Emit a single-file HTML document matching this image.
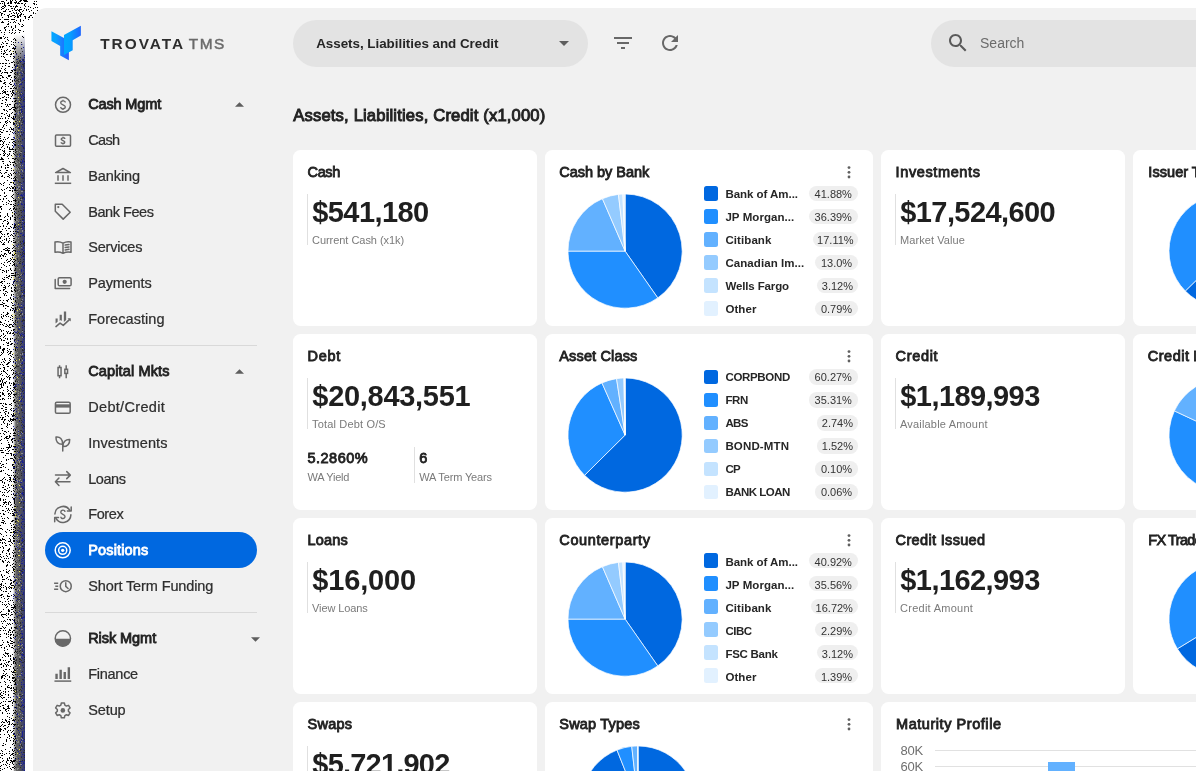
<!DOCTYPE html>
<html><head><meta charset="utf-8"><title>Trovata TMS</title>
<style>
html,body{margin:0;padding:0}
body{width:1196px;height:771px;overflow:hidden;background:#fff;position:relative;font-family:"Liberation Sans", sans-serif}
.t{position:absolute;white-space:pre}
#tx{position:absolute;left:0;top:0;width:1196px;height:771px;will-change:transform}
</style></head>
<body>
<svg style="position:absolute;left:0;top:0" width="40" height="771" viewBox="0 0 40 771" shape-rendering="crispEdges">
<defs><linearGradient id="bandx" x1="0" x2="1" y1="0" y2="0"><stop offset="0" stop-color="#606060" stop-opacity="0"/><stop offset="0.25" stop-color="#5c5c5c" stop-opacity="0.95"/><stop offset="0.6" stop-color="#555558" stop-opacity="1"/><stop offset="0.8" stop-color="#44486a" stop-opacity="1"/><stop offset="1" stop-color="#33386a" stop-opacity="1"/></linearGradient>
<linearGradient id="bandy" x1="0" x2="0" y1="0" y2="1"><stop offset="0" stop-color="#fff" stop-opacity="1"/><stop offset="1" stop-color="#fff" stop-opacity="0"/></linearGradient></defs>
<rect x="13" y="34" width="12" height="737" fill="url(#bandx)"/>
<rect x="13" y="34" width="12" height="30" fill="url(#bandy)"/>
<g stroke-width="1" transform="translate(0,0.5)"><path d="M6 0h1M10 0h1M12 0h1M15 0h1M20 0h2M23 0h4M1 1h3M10 1h2M16 1h1M19 1h2M24 1h4M34 1h1M36 1h1M4 2h1M8 2h1M10 2h2M14 2h3M18 2h1M0 3h1M2 3h1M4 3h1M7 3h2M10 3h2M15 3h1M17 3h3M21 3h2M25 3h1M33 3h2M4 4h1M24 4h1M34 4h1M36 4h1M4 5h2M8 5h2M16 5h1M24 5h1M2 6h2M5 6h1M10 6h2M13 6h1M15 6h3M25 6h1M28 6h1M1 7h1M4 7h1M15 7h1M20 7h1M30 7h1M35 7h1M37 7h1M2 8h2M11 8h2M14 8h1M24 8h1M33 8h1M1 9h1M6 9h1M8 9h1M14 9h1M17 9h1M19 9h3M26 9h1M28 9h1M5 10h1M12 10h1M15 10h2M18 10h2M23 10h1M26 10h1M31 10h1M37 10h1M3 11h3M9 11h2M19 11h1M22 11h1M29 11h1M0 12h1M13 12h1M16 12h1M20 12h1M33 12h1M1 13h2M11 13h1M14 13h1M16 13h1M18 13h1M21 13h1M33 13h1M35 13h1M1 14h1M4 14h1M9 14h1M17 14h1M20 14h2M23 14h1M36 14h1M1 15h1M7 15h2M12 15h3M17 15h1M19 15h2M30 15h2M8 16h1M10 16h2M15 16h1M17 16h2M20 16h1M24 16h2M29 16h1M2 17h1M8 17h1M14 17h1M17 17h2M25 17h1M28 17h2M32 17h1M25 18h1M34 18h1M36 18h1M0 19h1M4 19h5M11 19h4M20 19h1M28 19h1M16 20h1M20 20h1M23 20h1M2 21h1M8 21h1M14 21h1M20 21h1M1 22h3M10 22h1M13 22h1M15 22h1M8 23h1M18 23h1M7 24h2M19 24h1M22 24h1M15 25h1M23 25h1M6 26h1M8 26h1M11 26h1M15 26h1M21 26h2M4 27h2M11 27h1M15 27h1M4 28h1M13 28h1M5 29h1M12 29h1M18 29h1M0 30h1M5 30h1M9 30h1M12 30h1M15 30h1M19 30h2M23 31h1M1 32h1M4 32h1M9 32h1M12 32h1M15 32h1M19 32h1M11 33h1M14 33h1M4 34h1M3 36h1M22 36h1M0 37h2M5 37h1M7 37h1M23 37h1M0 38h2M4 38h1M14 38h1M7 39h1M13 39h1M15 39h1M8 40h1M15 40h1M5 41h1M11 41h1M2 42h1M13 42h1M15 42h1M3 43h1M6 43h2M1 44h1M11 44h1M13 44h1M6 45h1M14 45h1M0 46h1M2 46h2M9 46h1M15 46h1M0 47h1M2 47h1M13 47h1M15 47h1M12 48h4M1 49h1M7 49h1M14 49h1M4 50h1M6 50h1M10 50h1M1 51h1M4 51h1M9 51h1M13 51h1M15 51h1M5 52h1M15 52h1M1 53h1M3 53h2M11 53h1M13 53h1M3 54h1M6 54h2M10 54h2M1 56h1M3 56h1M10 56h1M13 56h2M4 57h1M14 57h1M13 58h1M5 59h1M6 60h1M8 60h1M13 61h1M11 62h2M14 62h1M0 63h1M2 63h2M5 63h2M9 63h1M14 64h1M5 65h1M14 65h1M2 66h1M8 66h2M15 66h1M12 67h1M14 67h1M1 68h1M5 68h1M4 69h1M13 69h1M15 69h1M0 70h1M5 70h1M11 70h2M14 70h2M0 71h1M12 71h1M2 72h1M4 72h4M10 72h2M15 72h1M1 73h1M7 73h1M14 73h1M14 74h2M0 75h2M8 75h3M2 76h1M8 76h2M14 76h1M2 77h2M6 77h1M11 77h1M14 77h1M0 78h1M7 78h1M15 78h1M10 79h1M15 79h1M0 80h1M4 80h1M12 80h1M14 80h1M0 81h2M12 81h1M14 81h1M4 82h2M10 82h1M3 83h2M9 83h1M5 84h1M10 84h2M13 85h1M2 86h1M5 86h1M8 86h1M12 86h1M1 87h1M14 87h1M1 88h1M10 88h2M13 88h3M5 89h1M3 90h1M12 90h2M2 91h1M4 91h2M7 91h1M10 91h1M12 91h1M3 92h3M12 92h2M0 93h1M2 93h1M5 93h1M11 93h1M13 93h1M6 94h3M12 94h1M14 94h2M8 95h1M12 95h1M14 95h1M4 96h1M11 96h1M15 96h1M2 97h2M6 97h1M8 97h1M0 98h1M10 98h1M13 98h3M5 99h2M2 100h1M6 100h1M15 100h1M12 101h1M14 101h2M5 102h1M1 103h2M15 103h1M5 104h1M7 104h1M9 104h2M14 104h1M7 105h1M14 105h1M1 106h1M6 106h1M8 106h1M14 106h1M12 107h4M11 108h1M15 108h1M3 109h2M9 109h2M13 109h2M4 110h1M6 110h1M14 110h2M7 111h1M15 111h1M12 112h1M1 113h2M6 113h1M11 113h1M4 114h1M9 114h1M14 114h2M7 115h1M9 115h1M1 116h1M8 116h2M13 116h1M15 116h1M5 117h1M11 117h1M13 117h1M15 117h1M0 118h1M2 118h1M5 118h1M8 118h1M12 118h3M13 119h2M7 120h1M5 121h2M9 121h1M15 121h1M0 122h1M5 122h1M7 122h1M10 122h1M13 122h1M15 122h1M6 123h1M13 123h2M4 124h1M13 124h2M3 125h1M6 125h1M14 125h1M3 126h1M2 127h1M10 127h1M4 128h1M11 128h1M13 128h1M0 129h2M9 129h1M11 129h3M3 130h1M13 130h1M0 131h1M6 131h2M10 131h1M15 131h1M1 132h2M12 132h1M13 133h1M15 133h1M0 134h1M9 134h1M0 136h1M15 136h1M4 137h1M8 137h1M0 138h1M7 138h1M3 139h1M5 139h1M11 139h3M0 140h2M0 141h1M2 141h1M4 141h1M13 141h2M3 142h1M9 142h1M12 142h1M15 142h1M3 143h1M13 143h1M0 144h1M2 144h1M6 144h1M8 144h1M14 144h2M3 145h1M12 145h1M15 145h1M2 146h1M7 146h1M1 147h1M7 147h1M9 147h1M4 148h1M9 148h1M12 148h1M0 149h1M9 149h7M2 150h1M4 150h1M15 150h1M3 151h2M9 151h2M13 151h1M4 152h1M15 152h1M3 153h1M5 153h1M9 153h1M13 153h1M0 154h1M4 154h1M7 154h1M9 154h1M14 154h1M3 155h2M8 155h1M11 155h1M7 156h1M1 157h1M1 158h2M8 158h1M12 158h4M0 159h4M14 159h2M2 161h2M9 161h1M14 161h1M10 162h1M12 162h4M3 163h1M15 163h1M7 164h1M10 164h1M13 164h1M5 165h1M7 165h2M13 165h1M1 166h1M1 167h1M5 167h1M7 167h2M5 168h1M11 168h1M0 170h1M6 170h2M11 170h1M13 170h1M15 170h1M0 172h1M5 172h2M14 172h1M1 173h1M4 173h1M10 173h1M13 173h1M15 173h1M8 174h1M11 174h1M2 175h1M9 175h1M11 175h1M1 176h2M7 176h2M15 176h1M4 177h1M9 177h1M14 177h1M11 178h1M13 178h1M15 178h1M15 179h1M7 180h1M13 180h3M4 182h1M10 182h2M13 182h1M0 183h1M3 183h1M13 183h1M1 184h1M9 184h1M14 184h1M3 185h1M11 186h1M14 186h1M7 187h1M9 187h1M12 187h2M15 187h1M6 188h1M10 188h1M12 188h2M15 188h1M1 189h1M4 189h1M2 190h1M9 190h2M12 190h1M14 190h2M12 191h1M4 192h1M4 193h1M13 194h1M0 195h1M6 195h1M12 195h1M4 196h2M11 196h1M12 197h1M3 198h1M6 198h1M13 198h1M0 199h1M3 199h1M15 199h1M8 200h1M13 200h3M2 201h1M9 201h1M11 201h1M15 201h1M6 202h1M8 203h1M15 203h1M3 204h1M6 204h1M10 204h2M13 204h1M14 205h2M0 206h2M13 206h1M0 207h1M14 207h2M1 208h1M10 208h1M13 208h2M1 209h1M9 209h1M13 209h1M15 209h1M11 210h1M14 210h1M14 211h1M0 212h1M12 212h1M15 212h1M7 213h1M12 213h1M14 213h2M7 214h1M14 214h1M0 215h1M7 215h1M12 215h1M15 215h1M0 216h1M5 216h1M8 216h1M12 216h1M4 217h1M10 217h1M14 217h2M10 218h1M0 219h2M7 219h1M10 219h1M14 219h2M4 220h2M15 220h1M3 221h1M7 221h1M14 221h1M8 222h1M2 223h1M7 223h2M7 224h1M12 224h1M14 224h2M3 225h1M14 225h2M0 226h1M3 226h1M6 226h1M10 226h1M14 226h1M11 227h1M14 227h2M5 228h1M8 228h2M13 228h1M2 229h1M15 229h1M6 230h1M0 231h2M10 231h1M13 231h1M15 231h1M0 232h1M15 232h1M1 233h1M7 233h2M13 233h1M2 234h1M4 234h1M7 234h1M11 234h1M14 234h1M10 235h1M12 235h1M15 235h1M1 236h1M4 236h1M8 236h1M13 236h1M0 237h1M0 238h1M6 238h1M9 238h1M13 238h2M4 239h1M6 239h1M2 240h1M6 240h1M9 240h1M13 240h1M0 241h1M8 241h1M11 241h1M1 242h1M4 242h1M8 242h1M13 242h3M3 243h1M2 244h3M13 245h1M14 246h1M7 247h1M13 247h1M5 248h2M8 248h2M12 248h1M14 248h1M3 249h2M7 249h1M15 249h1M5 250h5M13 250h3M1 251h1M8 251h1M12 251h1M15 251h1M8 252h1M10 252h1M4 253h2M9 253h2M14 253h2M1 254h1M4 254h1M6 254h1M12 254h1M14 254h1M0 255h1M2 255h2M12 255h2M15 255h1M0 256h1M3 256h1M5 256h1M12 257h1M1 258h1M10 258h1M7 259h1M11 259h1M13 259h2M6 260h1M10 260h1M15 260h1M8 261h2M12 261h1M14 261h1M4 262h1M7 262h1M13 262h1M1 263h1M10 263h1M14 263h1M3 264h1M13 264h2M4 265h1M9 265h1M12 265h1M14 265h1M6 266h1M1 267h1M10 268h1M15 268h1M0 269h1M10 269h1M2 270h2M6 270h1M8 270h1M11 270h1M14 270h2M4 271h1M6 271h1M2 272h1M6 272h1M15 272h1M11 273h3M15 273h1M6 275h1M9 275h1M11 275h5M8 276h2M15 276h1M4 277h1M6 277h2M11 277h1M2 278h1M8 278h1M3 279h2M10 279h1M14 279h1M1 281h2M4 281h1M14 281h1M0 282h2M13 282h1M2 283h1M7 283h1M9 283h1M12 284h1M1 285h1M4 285h1M9 285h1M13 285h1M15 285h1M5 286h1M8 286h1M3 287h3M11 287h1M14 287h2M5 288h1M11 288h1M15 288h1M3 289h2M14 289h1M0 290h1M3 290h1M11 290h1M14 290h1M5 291h2M11 291h2M15 291h1M7 292h1M3 293h1M5 293h1M4 294h1M11 294h1M13 294h1M4 295h1M6 295h1M11 295h1M13 296h1M0 297h1M10 297h1M15 297h1M10 298h1M13 298h1M8 299h1M11 299h1M13 299h1M15 299h1M0 300h1M3 300h1M6 300h2M15 300h1M7 301h1M15 301h1M2 302h1M11 302h1M3 303h2M12 303h1M0 304h3M3 305h1M5 305h2M12 305h2M15 305h1M3 306h1M7 306h2M11 307h1M15 307h1M5 308h1M12 308h2M15 308h1M10 309h1M15 309h1M10 310h1M12 310h1M14 310h2M14 311h1M3 312h1M7 312h1M14 312h1M7 313h2M1 314h1M6 314h2M3 315h1M5 315h1M11 315h1M15 315h1M1 316h1M3 316h1M6 316h1M8 316h1M12 316h1M1 317h1M10 317h1M2 318h1M12 318h1M10 319h1M5 320h1M12 320h1M15 320h1M0 321h1M8 321h1M0 322h2M13 322h1M15 322h1M4 323h1M14 323h1M0 324h1M2 324h1M6 324h1M9 324h3M13 324h1M15 324h1M3 325h1M7 325h1M9 325h1M12 325h1M5 326h2M8 326h1M12 326h2M9 327h2M0 329h1M13 329h2M1 330h1M3 330h1M11 330h1M13 330h2M1 331h1M6 331h1M8 331h1M7 332h1M10 332h1M13 332h1M3 333h1M7 333h1M9 333h2M12 333h2M3 334h1M14 334h1M1 335h1M5 335h1M13 335h1M0 336h1M4 336h1M3 337h1M0 338h1M5 338h1M7 338h1M10 338h1M12 338h1M1 339h1M7 339h1M10 339h1M1 340h1M3 340h2M14 340h1M10 341h1M15 341h1M6 342h1M8 342h1M7 343h2M11 343h2M3 344h1M10 344h2M14 344h1M7 345h2M14 345h1M0 346h1M14 346h2M0 347h1M0 348h1M3 348h2M7 348h1M14 348h1M2 349h3M9 349h1M15 349h1M2 350h2M7 350h1M15 350h1M3 351h1M8 351h1M10 351h2M1 352h1M3 352h1M7 352h1M10 352h1M2 353h1M9 353h2M1 354h1M8 354h1M12 354h1M0 355h1M10 355h1M15 355h1M11 356h1M13 357h1M4 358h1M9 358h1M2 359h1M4 359h1M10 359h1M5 360h1M9 360h1M15 360h1M3 361h1M10 361h1M13 361h1M1 362h1M4 362h1M8 362h2M7 363h2M15 363h1M0 364h1M2 364h1M6 364h2M3 365h1M12 365h1M14 365h1M7 366h2M13 366h1M3 367h2M15 367h1M0 368h1M4 368h1M10 368h1M14 368h1M4 369h1M12 369h1M15 369h1M3 370h1M7 370h1M11 370h1M13 370h1M1 371h1M3 371h2M5 372h1M13 372h1M1 373h1M6 373h1M13 373h1M15 373h1M0 374h1M7 374h1M12 374h1M2 375h1M9 375h1M15 375h1M6 376h1M8 376h1M14 376h1M7 377h1M9 377h2M13 377h1M1 378h1M4 378h1M9 378h1M14 378h1M1 379h1M3 379h1M9 379h1M0 380h1M2 380h1M0 381h1M2 381h1M6 381h1M15 381h1M2 382h1M4 382h2M9 382h1M13 382h1M15 382h1M1 383h1M3 383h1M5 383h1M9 383h1M11 383h1M13 383h3M0 384h2M3 384h1M13 384h2M1 385h1M3 385h1M10 385h1M13 385h1M1 386h1M7 386h1M15 386h1M1 387h2M7 387h1M13 387h3M0 388h1M10 388h1M14 388h1M7 389h1M13 389h1M15 389h1M3 390h1M8 390h1M12 390h1M7 391h1M10 391h1M13 391h1M15 391h1M0 392h1M2 392h1M11 392h1M2 393h2M8 393h2M11 393h1M14 393h1M2 394h2M8 394h1M10 394h1M13 394h3M0 395h1M4 395h1M9 395h1M14 395h1M0 396h1M8 396h1M10 396h1M15 396h1M13 397h1M2 398h2M8 398h1M10 398h1M0 399h1M2 399h1M4 399h1M14 399h1M13 400h2M13 401h1M14 402h2M0 403h2M3 403h1M5 403h1M11 403h1M5 404h2M9 404h2M2 405h1M11 405h1M15 405h1M3 406h1M5 407h2M1 408h2M11 408h1M13 408h1M5 409h2M10 409h1M15 409h1M3 410h1M11 410h1M14 410h1M5 411h2M13 411h1M15 411h1M0 412h1M4 412h1M8 412h1M5 413h1M8 413h1M13 413h1M5 414h1M11 414h1M13 414h1M15 414h1M1 415h1M7 415h1M12 415h3M5 416h1M8 416h1M12 416h2M0 417h1M2 417h2M2 418h1M10 418h1M13 418h2M1 419h2M4 419h2M10 419h6M4 420h1M8 420h1M10 420h1M12 420h2M3 421h1M9 421h1M11 421h1M15 421h1M3 422h1M4 423h1M7 423h1M11 423h1M1 424h1M7 424h1M9 424h1M7 425h1M6 426h1M13 426h1M7 427h1M1 428h2M11 428h1M13 429h1M15 429h1M2 430h1M13 430h1M15 430h1M4 431h2M8 431h1M6 432h1M14 432h2M0 433h1M3 433h1M10 433h1M13 433h3M4 434h1M9 435h1M13 435h3M1 436h1M6 436h2M9 436h2M5 437h2M9 437h1M4 438h1M6 438h3M12 438h3M1 439h1M11 439h2M0 440h1M7 440h1M11 440h1M14 440h2M12 441h1M8 442h1M12 442h1M1 443h1M8 444h2M14 444h1M9 445h1M11 445h1M9 446h1M11 446h1M13 446h3M6 447h5M15 447h1M1 448h1M3 448h1M8 448h1M7 449h1M12 449h2M15 449h1M0 450h3M5 450h1M9 450h1M8 451h1M14 451h2M1 452h3M6 453h3M10 453h2M11 454h1M13 454h1M5 455h1M11 455h1M13 455h1M15 455h1M14 456h1M3 457h1M14 457h1M10 458h3M15 458h1M6 459h1M8 459h1M13 459h1M6 460h1M14 460h1M1 461h1M14 461h1M14 462h2M0 463h1M6 463h1M15 463h1M2 464h2M12 464h2M15 464h1M1 465h1M12 465h1M3 466h1M13 466h2M0 467h2M5 467h1M13 467h1M13 468h3M8 469h1M1 470h1M3 470h1M11 470h1M0 471h2M13 472h1M15 472h1M5 473h1M7 474h1M8 475h2M11 475h1M13 475h1M15 475h1M14 476h1M4 477h1M9 477h2M14 477h1M3 478h1M10 478h1M15 478h1M2 479h1M5 479h1M9 479h2M13 479h1M15 479h1M0 480h2M7 480h1M10 480h1M15 480h1M2 481h1M9 481h1M11 481h1M13 481h2M2 482h1M4 482h1M14 482h1M4 483h1M8 484h1M3 485h1M8 485h1M11 485h1M13 485h1M15 485h1M5 486h1M13 486h1M2 487h2M9 487h1M15 487h1M7 488h1M13 488h1M4 489h2M15 489h1M6 490h1M9 490h1M13 490h1M0 491h1M8 491h1M11 491h1M14 491h1M2 492h1M4 492h1M7 492h1M13 493h1M3 494h1M11 494h1M13 494h1M2 495h1M4 495h1M14 495h2M6 496h1M8 496h1M15 496h1M12 497h1M15 497h1M0 498h1M13 498h2M0 499h1M3 499h1M5 499h1M14 499h1M0 500h1M3 500h1M14 500h1M5 501h1M9 501h1M14 501h1M3 502h4M8 502h1M10 502h1M14 502h1M4 503h1M8 503h1M14 503h1M3 504h1M6 504h1M8 504h1M11 504h1M15 504h1M0 505h1M10 505h1M2 506h1M5 506h1M14 506h2M12 507h1M15 507h1M6 508h1M8 508h1M8 509h1M11 509h1M13 509h2M2 510h2M7 510h1M9 510h1M14 510h2M5 511h1M12 511h1M8 512h1M14 512h1M0 513h1M3 513h1M10 513h1M12 513h2M3 514h2M13 514h1M12 515h3M1 516h1M7 517h1M2 518h1M4 518h1M8 518h1M15 518h1M15 519h1M2 520h2M12 520h3M4 521h1M11 521h2M15 521h1M1 522h3M3 523h1M5 523h1M10 523h1M13 524h1M0 525h1M11 525h1M14 526h1M11 527h1M13 527h2M0 528h2M15 528h1M2 529h1M7 529h1M11 529h1M13 529h1M9 530h1M15 530h1M5 531h1M13 531h2M6 532h1M10 532h2M13 532h3M0 533h1M14 533h1M1 534h1M6 535h1M10 535h1M13 535h2M3 536h1M12 536h1M14 536h1M13 537h1M15 537h1M2 538h1M9 538h1M13 538h2M0 539h1M2 539h3M10 539h1M0 540h2M5 540h1M10 540h1M13 540h2M8 541h3M13 541h2M0 542h1M2 542h1M4 542h1M11 542h1M2 543h1M5 543h1M12 543h1M9 544h1M13 544h1M5 545h2M10 545h1M2 546h1M14 546h1M0 547h1M3 547h1M3 548h1M9 548h1M15 548h1M8 549h2M15 549h1M3 550h1M7 550h2M13 550h1M2 551h1M8 551h1M2 552h1M12 552h1M14 552h1M6 553h1M9 553h1M13 553h1M0 554h1M9 554h1M6 555h1M13 555h1M15 555h1M0 556h1M3 556h1M7 556h1M13 556h1M15 556h1M1 557h1M10 557h1M4 558h1M6 558h1M8 558h1M12 558h1M0 559h1M14 559h1M2 560h1M5 560h1M13 560h1M2 561h2M8 561h1M15 561h1M3 562h1M7 562h1M9 562h1M13 563h1M7 564h1M12 564h1M15 564h1M6 565h2M10 565h1M6 566h1M13 566h2M12 567h1M15 567h1M13 568h1M6 569h1M13 569h2M3 570h1M9 570h1M13 570h2M0 571h1M6 571h1M8 571h1M14 571h1M6 572h2M12 572h1M8 573h1M14 573h1M1 574h1M14 574h1M1 575h1M4 575h1M2 576h1M9 576h1M13 576h2M2 577h1M7 577h1M14 577h1M6 578h1M15 578h1M2 579h3M8 579h1M10 579h1M10 580h2M15 580h1M2 581h1M13 581h2M11 582h1M13 582h1M1 583h1M5 583h1M10 583h2M0 584h2M10 584h1M15 584h1M1 585h1M3 585h1M11 585h3M15 585h1M0 586h1M5 586h1M9 586h1M14 586h1M1 587h1M3 587h1M6 587h1M8 587h1M10 587h2M14 587h2M0 588h1M6 588h1M9 588h1M11 588h1M13 588h2M0 589h1M6 589h1M15 589h1M1 590h1M3 591h1M5 591h2M10 591h1M15 592h1M8 593h1M1 594h2M0 595h2M7 595h1M11 595h1M14 595h1M3 596h1M7 596h3M15 596h1M1 597h1M4 598h1M8 598h1M7 599h1M10 600h1M12 600h1M0 601h1M5 601h1M8 601h1M2 602h1M13 602h1M8 603h1M2 604h1M4 604h1M6 604h1M9 604h1M13 604h1M15 604h1M5 605h1M11 605h1M14 605h1M7 606h1M14 606h2M6 607h1M11 607h4M13 608h1M15 608h1M3 609h1M8 609h1M11 609h2M8 610h2M15 610h1M1 611h1M8 611h2M13 611h1M0 612h1M11 612h1M14 612h1M6 613h1M8 613h1M15 613h1M1 614h5M8 614h1M11 614h2M15 614h1M1 615h1M6 615h1M10 615h1M2 616h1M15 616h1M3 617h1M8 617h1M14 617h1M7 619h1M9 619h2M12 619h1M14 619h1M4 620h1M10 620h1M13 620h2M1 621h1M3 621h1M5 621h1M14 621h1M2 623h1M7 623h1M9 623h1M12 623h1M15 623h1M8 624h1M10 624h1M6 625h1M2 626h1M3 627h1M5 627h1M11 627h1M14 627h2M0 628h2M4 628h1M11 628h1M9 629h1M0 630h1M3 630h1M5 630h1M9 630h2M13 630h2M8 631h1M12 631h1M8 632h1M10 632h1M12 632h1M15 632h1M4 633h1M6 633h1M0 634h1M6 634h1M8 634h1M10 634h2M13 634h1M10 635h1M13 635h1M0 636h1M8 636h1M15 636h1M6 637h1M10 637h1M13 637h1M10 638h2M2 640h1M10 640h1M7 641h1M11 641h2M14 641h1M3 642h1M7 642h2M13 642h2M10 643h3M2 644h1M8 644h1M0 645h2M9 645h1M12 645h1M15 645h1M6 646h1M9 646h1M14 646h1M1 647h1M4 647h1M11 647h2M4 648h1M13 648h1M7 649h1M15 649h1M4 650h1M15 651h1M5 652h1M14 652h1M5 653h4M3 654h1M7 654h1M12 654h1M4 655h1M8 655h1M10 655h1M5 656h1M8 656h1M10 656h1M2 657h1M13 657h1M15 657h1M10 658h1M13 658h1M0 659h1M10 659h1M13 659h3M0 660h1M3 660h1M5 660h1M11 660h1M15 660h1M8 661h2M13 661h2M6 662h1M8 662h1M13 662h1M15 662h1M1 663h1M4 663h1M13 663h1M15 663h1M0 664h2M5 664h1M7 664h1M11 664h1M3 665h1M6 665h1M8 665h1M3 666h1M6 666h1M10 666h1M1 667h1M13 667h2M13 668h1M5 669h2M9 669h1M14 669h1M3 670h1M14 670h2M4 671h1M11 671h1M13 671h1M12 672h4M3 673h1M6 673h1M5 674h1M12 674h1M15 674h1M2 675h3M7 675h1M13 675h1M1 676h2M5 676h1M9 676h1M1 677h2M9 677h1M12 677h3M1 678h1M4 678h1M12 678h2M7 679h1M15 679h1M9 680h1M12 680h1M14 680h2M4 681h1M13 681h2M0 682h1M5 682h1M10 682h1M15 682h1M15 683h1M5 684h1M14 684h2M8 685h1M11 685h1M1 686h1M7 686h1M7 687h3M11 687h1M13 687h1M5 688h1M10 688h2M13 688h1M5 689h1M14 689h2M0 690h1M11 690h1M13 690h1M3 691h1M5 691h1M8 691h1M14 691h1M1 692h1M5 692h1M0 693h1M3 693h1M13 693h2M0 694h1M5 694h1M8 694h1M14 694h1M1 695h2M8 695h1M0 696h1M14 696h1M1 697h1M3 697h2M8 697h1M10 697h1M2 698h1M6 699h1M13 699h1M11 700h1M3 701h1M5 701h1M8 701h3M13 701h3M1 702h1M12 702h1M15 702h1M0 703h1M12 703h1M5 704h1M2 705h2M8 705h1M12 705h1M15 705h1M0 706h1M7 706h2M14 706h1M3 707h1M8 707h1M15 707h1M3 708h2M7 708h3M15 708h1M5 709h2M0 710h1M5 710h1M8 710h1M13 710h1M15 710h1M6 711h1M2 712h1M14 712h1M2 713h1M7 713h1M9 713h1M13 713h2M12 715h1M7 716h1M9 717h1M15 717h1M11 718h1M2 719h1M5 719h1M9 719h1M13 719h1M15 719h1M5 720h2M12 720h3M2 721h1M6 721h1M8 721h2M1 722h1M3 722h2M7 722h1M9 722h1M9 723h1M12 723h1M2 724h1M8 724h2M11 724h1M13 724h3M1 725h1M4 725h2M14 725h1M0 726h1M3 726h1M8 726h1M13 726h1M7 727h1M0 728h1M4 728h2M13 728h2M0 729h2M5 729h1M15 729h1M0 730h1M3 730h1M8 730h1M10 730h1M13 730h1M0 731h1M7 731h1M12 731h1M7 732h1M11 732h1M14 733h1M0 734h1M4 734h1M8 734h1M13 734h2M9 735h1M9 736h1M14 736h2M0 737h1M7 737h1M11 737h1M15 737h1M9 738h1M13 738h1M15 738h1M6 739h1M14 739h1M6 740h1M10 740h1M13 740h1M6 741h1M13 741h1M15 741h1M15 742h1M3 743h1M13 743h1M15 743h1M5 744h1M12 744h1M2 745h2M14 745h1M10 747h1M15 747h1M5 749h1M12 749h1M1 750h1M12 750h1M14 750h1M2 751h1M9 751h1M13 751h1M15 752h1M0 753h1M2 753h1M6 753h1M9 753h1M12 753h2M4 754h1M11 754h2M15 754h1M1 755h2M10 755h1M13 755h1M0 757h1M9 757h1M13 757h1M2 758h1M7 758h1M9 758h1M11 758h1M15 758h1M7 759h1M3 760h1M7 760h2M10 760h2M13 760h3M2 761h1M6 761h1M11 761h4M0 762h1M6 762h1M10 762h1M12 762h1M7 763h1M12 763h1M3 764h1M5 764h1M9 764h1M13 764h1M1 765h1M6 765h1M0 766h1M9 766h1M14 766h1M7 767h1M12 767h2M0 768h1M4 768h1M10 768h1M14 768h2M2 769h1M11 769h1M0 770h1M14 770h1" stroke="#000"/>
<path d="M21 42h1M21 48h1M22 51h1M16 53h1M20 53h1M18 56h1M20 57h1M18 58h1M16 59h1M23 59h1M19 60h2M23 60h1M17 61h1M19 61h1M23 61h1M16 62h1M18 62h1M20 62h1M17 63h2M24 63h1M22 64h2M17 65h1M23 65h1M17 66h1M23 66h1M15 67h1M19 67h1M15 68h1M15 69h1M19 69h1M23 71h1M23 72h1M17 73h1M24 73h1M17 74h1M22 75h1M15 76h1M16 77h1M18 79h1M20 79h1M16 80h2M24 80h1M15 81h1M18 81h1M22 82h1M16 83h1M16 87h1M23 87h1M16 88h1M24 90h1M17 91h1M19 92h1M22 93h1M20 94h1M22 95h1M24 97h1M16 98h1M20 98h1M21 99h1M24 99h1M16 100h1M20 100h1M23 100h1M19 101h1M19 102h1M16 103h2M18 105h1M19 106h1M24 106h1M17 107h1M20 107h1M22 107h1M16 108h1M24 108h1M18 109h1M21 109h1M15 110h1M19 110h1M20 111h1M22 111h1M20 113h1M22 113h1M19 117h1M22 118h1M19 119h1M21 119h1M16 120h2M21 120h1M16 121h1M23 121h1M22 122h1M16 123h1M19 123h1M17 124h1M19 124h1M22 124h1M15 125h1M19 125h1M16 126h1M18 126h1M15 127h1M18 128h2M17 131h1M18 132h1M21 132h1M23 132h1M23 133h1M22 134h1M17 135h1M20 135h1M20 136h1M17 138h1M19 138h1M24 138h1M17 139h1M22 139h1M15 140h1M18 141h1M20 141h1M21 144h1M23 146h1M18 147h1M23 147h1M19 148h1M23 148h1M16 151h1M21 151h1M24 152h1M20 153h1M17 154h1M24 154h1M15 155h1M20 155h1M16 158h1M23 158h1M15 159h1M17 159h1M21 159h1M18 160h1M24 161h1M19 162h4M16 165h1M18 167h1M18 168h2M21 168h1M24 169h1M19 171h1M22 171h1M18 172h1M23 173h1M20 174h1M22 175h1M16 176h1M16 177h1M23 177h1M22 178h2M16 180h1M18 181h1M23 181h1M19 182h2M15 186h1M18 186h2M19 188h1M15 189h1M21 189h1M16 190h2M23 190h2M21 191h1M15 192h3M16 193h1M17 194h2M21 195h1M22 197h2M20 198h1M22 198h1M16 200h1M20 200h1M17 201h2M18 202h1M20 202h1M24 204h1M17 205h1M23 207h1M16 208h1M19 208h1M16 209h1M23 209h1M20 210h2M23 210h1M18 211h1M15 212h1M21 212h1M16 213h1M19 214h1M15 215h1M18 215h1M21 215h1M24 215h1M17 217h1M23 217h1M15 218h1M22 219h2M16 220h1M20 220h1M20 222h1M24 222h1M18 223h1M23 223h1M21 224h1M16 226h1M18 226h1M24 226h1M20 227h2M18 228h1M21 228h1M23 228h1M17 229h1M18 230h1M22 230h1M24 230h1M16 231h1M17 232h2M16 233h1M18 235h1M20 236h1M24 236h1M15 241h1M20 241h1M22 241h1M17 242h1M20 242h1M24 242h1M23 243h2M20 244h1M23 244h1M16 245h1M24 245h1M21 246h1M21 247h1M15 248h1M21 249h2M23 251h1M20 252h1M22 252h1M23 253h2M22 254h1M24 254h1M21 255h1M18 256h1M23 256h1M16 257h1M17 258h1M17 259h1M20 259h1M23 259h2M18 261h1M20 261h1M23 261h1M22 262h1M19 263h2M24 264h1M24 265h1M15 266h1M17 266h1M23 266h1M24 268h1M15 269h1M21 269h1M15 270h1M23 273h1M15 274h1M17 274h2M22 274h1M18 275h3M20 276h1M18 277h1M20 279h1M15 280h1M16 281h1M21 281h1M20 284h1M21 286h1M15 287h1M24 287h1M24 289h1M15 290h1M17 290h1M21 290h1M23 290h1M24 291h1M22 292h1M24 292h1M20 295h1M23 295h2M19 296h3M24 296h1M20 297h1M17 298h1M16 299h1M21 300h1M23 301h1M16 302h1M18 303h1M15 305h2M15 306h1M17 306h1M17 307h1M19 307h1M22 307h1M24 307h1M24 308h1M16 309h1M18 309h1M22 309h1M15 310h1M17 310h1M19 312h1M20 313h2M19 314h2M24 314h1M19 315h1M22 316h1M15 317h1M16 318h1M23 319h1M22 320h3M15 321h1M17 321h1M22 321h1M15 322h1M17 322h1M22 325h1M24 326h1M18 329h1M22 330h1M24 331h1M18 332h1M17 333h1M24 333h1M18 335h1M21 335h1M24 335h1M24 336h1M23 337h1M16 338h1M15 339h1M20 341h2M22 342h1M21 343h1M20 344h1M16 346h1M15 347h1M15 348h1M16 349h2M22 349h1M24 349h1M22 350h2M23 352h2M21 353h1M20 354h1M15 355h1M17 355h1M24 355h1M21 356h1M18 357h1M21 357h1M22 358h1M20 359h1M19 360h2M15 362h1M16 363h1M24 363h1M22 364h1M16 365h1M21 365h1M16 366h3M21 369h1M15 371h1M16 372h1M23 372h1M19 373h1M17 374h1M22 374h1M22 375h2M19 376h1M18 377h1M24 377h1M23 378h1M16 379h1M24 379h1M15 380h1M17 381h1M15 384h2M23 384h1M15 386h1M15 387h2M22 387h1M20 388h1M17 389h1M21 389h1M19 390h1M23 390h1M22 391h1M16 393h1M23 393h1M16 394h1M18 395h1M21 395h1M15 396h1M21 396h1M17 398h1M22 398h1M21 399h1M16 401h2M18 403h1M17 404h1M21 404h2M18 405h1M16 406h1M18 407h1M21 407h1M21 409h1M21 410h1M15 411h1M22 412h1M24 413h1M15 414h1M15 415h1M15 416h1M17 417h1M23 417h1M20 418h1M15 420h1M19 420h1M21 420h1M21 422h1M22 424h1M23 425h1M17 426h1M24 426h1M16 427h1M22 427h1M20 430h2M22 431h1M18 432h1M20 432h1M22 432h1M21 433h1M24 433h1M17 434h1M15 435h1M20 435h1M19 438h1M22 439h2M16 440h1M18 441h1M20 442h1M17 443h1M19 443h1M24 443h1M15 444h1M24 444h1M18 445h1M22 445h2M23 448h1M16 449h1M17 451h1M19 451h1M19 452h1M21 453h1M20 455h1M24 456h1M15 457h1M19 457h1M22 457h1M22 458h1M20 459h2M17 460h1M16 463h1M18 463h1M18 464h1M24 464h1M21 465h2M16 466h1M16 467h1M22 467h1M23 468h1M16 469h1M15 470h2M18 470h1M20 470h1M15 471h1M24 472h1M17 473h1M21 473h1M21 475h1M15 476h1M17 476h1M17 477h1M18 478h2M20 479h1M21 481h1M15 482h2M16 484h1M20 484h1M19 485h1M16 486h1M15 487h1M16 488h1M22 488h1M15 489h1M17 489h1M16 490h1M23 490h1M19 491h1M17 492h1M20 492h1M23 492h1M18 493h1M22 493h1M15 494h1M23 494h1M16 495h1M20 496h1M22 497h1M22 499h1M24 500h1M19 501h1M21 502h1M23 502h1M20 503h1M23 503h1M15 504h1M17 506h1M23 506h1M23 507h1M15 509h1M23 509h1M23 510h1M16 511h2M16 512h1M16 515h1M21 515h1M15 516h1M16 517h1M16 519h1M18 519h1M22 519h1M17 520h1M16 521h1M23 521h1M15 522h1M21 523h1M15 524h1M24 524h1M24 526h1M15 527h1M18 527h1M19 528h1M17 530h1M19 531h2M16 532h1M24 533h1M19 534h1M20 535h1M15 536h1M20 537h1M22 538h1M19 540h1M24 540h1M15 541h1M17 541h1M19 541h1M23 541h1M19 542h1M22 542h1M21 543h1M22 544h1M24 544h1M17 546h1M22 546h1M19 548h1M23 548h1M15 551h1M22 551h1M24 551h1M15 552h1M18 552h1M23 553h1M16 554h1M17 555h1M21 555h1M23 555h1M23 556h1M23 558h1M19 560h1M16 562h1M21 563h1M24 564h1M20 565h1M24 565h1M20 566h1M24 566h1M22 568h1M22 569h2M17 570h1M19 570h2M21 571h2M22 572h1M20 573h1M20 574h2M21 575h1M21 577h1M18 579h1M20 579h1M17 583h3M21 583h1M15 585h1M18 585h2M15 588h1M16 589h1M18 593h2M22 594h2M15 596h1M15 597h2M17 598h1M21 598h1M17 599h1M19 599h1M22 599h1M20 600h1M17 601h1M19 602h1M24 602h1M17 605h1M21 605h1M19 606h1M15 607h1M21 607h1M21 608h2M18 609h1M21 609h1M21 610h4M18 611h2M17 612h1M21 613h1M15 614h1M22 614h1M18 615h1M21 615h1M15 616h1M17 616h1M21 616h1M17 617h1M20 617h2M21 618h1M24 620h1M17 621h1M15 622h1M20 622h1M17 623h1M20 623h1M20 625h1M16 626h1M21 626h1M24 626h1M16 627h1M15 628h2M22 629h1M19 630h1M21 631h1M17 633h1M20 633h1M19 634h1M16 635h2M21 637h1M20 638h1M23 638h1M15 639h1M19 640h3M20 644h1M16 647h1M20 647h1M23 647h1M19 648h1M15 649h1M17 649h1M15 650h1M20 650h1M17 651h1M19 651h1M22 651h1M16 652h1M17 653h1M20 653h1M23 654h1M24 657h1M19 658h1M16 659h1M19 659h2M24 659h1M15 660h2M21 660h1M19 661h1M24 661h1M22 662h2M16 664h1M15 666h1M23 667h1M17 668h1M22 671h1M15 672h1M21 672h1M17 674h1M22 675h1M24 677h1M15 678h1M16 679h1M22 679h2M19 680h1M21 686h1M16 687h1M21 687h1M16 688h1M15 689h2M20 689h1M16 690h1M19 690h1M21 690h1M16 691h1M15 692h2M15 694h1M19 694h2M22 694h1M22 695h2M21 696h1M19 698h2M16 699h1M16 704h1M18 704h1M18 705h2M21 705h1M20 706h1M24 706h1M16 707h1M23 707h1M20 709h1M16 711h1M22 711h1M15 712h1M15 713h1M16 714h1M22 714h1M17 716h1M19 716h1M23 716h1M22 718h1M21 719h1M18 720h1M20 720h1M17 724h1M18 725h1M21 725h1M18 727h2M16 728h2M20 728h1M17 729h1M18 734h1M15 735h1M16 736h1M16 737h1M22 737h1M17 739h1M24 739h1M24 743h1M21 744h1M19 745h1M21 745h1M22 746h1M20 747h1M15 748h1M20 749h1M23 749h1M17 750h1M20 750h1M24 750h1M23 752h2M24 754h1M16 755h1M24 755h1M21 757h1M24 757h1M22 760h1M24 760h1M20 761h1M22 761h1M18 763h2M16 764h1M20 764h1M15 767h1M20 767h1M24 767h1" stroke="#2c2c30"/>
<path d="M16 40h1M22 44h1M16 46h1M21 49h1M17 53h1M16 54h1M21 60h2M15 62h1M15 63h1M18 64h1M14 67h1M16 67h2M16 68h1M21 69h1M16 71h1M19 71h1M14 72h1M22 72h1M14 74h1M19 74h1M16 76h1M18 76h1M17 77h1M14 78h1M15 79h1M19 80h1M14 81h1M20 82h1M19 83h1M15 84h1M18 84h1M19 86h1M17 87h1M14 88h1M17 88h1M16 90h1M18 92h1M21 93h1M14 94h1M18 94h1M14 95h1M16 95h1M15 96h2M16 97h1M18 97h1M17 99h2M16 101h1M15 102h1M16 104h1M19 104h1M21 104h1M16 105h1M18 105h1M18 108h1M20 108h1M17 109h2M18 111h1M20 111h1M15 112h1M18 112h1M17 113h2M21 113h1M18 114h1M22 116h1M16 117h1M20 117h1M18 119h1M20 119h1M16 120h1M17 121h1M15 122h1M17 123h1M21 123h1M17 124h2M14 125h1M16 125h1M18 126h1M16 128h1M17 129h1M19 130h1M21 130h1M16 131h1M18 133h1M20 133h1M20 134h1M15 135h1M18 135h1M15 136h1M17 138h1M15 139h2M18 139h1M14 142h1M18 144h1M21 144h1M14 145h1M18 145h1M18 148h1M14 149h1M16 150h2M14 151h1M19 151h1M17 152h1M20 152h2M16 156h1M18 156h1M14 158h1M16 159h1M22 160h1M22 161h1M15 162h2M19 162h1M17 163h1M20 165h1M22 165h1M17 167h1M15 168h2M18 168h1M16 169h1M18 169h1M21 169h1M15 170h1M22 170h1M19 171h1M21 171h2M17 172h1M19 174h1M15 175h1M14 176h1M16 176h1M16 178h1M17 179h1M18 181h1M17 184h1M21 184h1M15 185h1M15 186h1M18 186h2M17 187h2M22 187h1M17 188h1M16 189h2M19 189h1M17 191h1M21 191h2M16 192h1M15 193h1M17 193h1M21 195h1M19 198h1M16 199h1M21 199h1M17 201h1M20 201h1M20 202h1M21 203h1M18 204h1M15 207h1M17 207h1M14 210h1M15 212h1M15 213h1M16 214h1M16 215h1M16 217h1M16 219h1M16 220h2M14 221h2M18 221h1M22 221h1M22 224h1M16 225h1M21 228h1M17 230h2M22 230h1M22 231h1M15 232h1M17 233h1M14 234h1M17 234h1M16 235h3M14 236h1M16 237h1M15 238h2M18 238h1M14 240h2M18 241h1M17 242h1M16 245h1M15 246h2M18 246h1M21 247h1M14 248h1M18 248h1M15 249h1M21 249h1M16 252h1M16 254h1M15 255h1M18 255h1M18 256h1M14 257h1M16 257h1M15 258h1M16 259h1M15 261h2M16 262h1M18 262h1M17 263h1M17 267h1M14 269h1M19 269h1M15 271h1M16 273h1M18 273h1M21 274h1M18 275h1M20 275h1M16 276h2M19 278h1M21 279h1M16 280h1M19 280h1M17 281h1M16 284h1M18 284h1M16 286h1M17 288h1M19 288h1M15 289h1M19 290h1M18 291h1M14 292h1M16 292h1M15 293h1M22 293h1M17 294h1M22 294h1M15 295h1M15 296h1M17 296h2M14 297h2M18 298h1M15 299h2M22 299h1M21 301h1M14 302h1M15 303h1M17 303h1M21 304h1M14 305h1M16 305h2M21 305h1M15 306h2M14 307h1M18 308h1M17 309h1M21 310h1M17 311h1M19 313h1M22 313h1M22 314h1M17 315h1M20 315h1M14 318h1M18 319h1M14 321h1M16 321h1M16 323h1M14 324h1M14 326h2M16 328h1M16 329h1M14 330h1M16 330h1M16 331h1M22 331h1M14 332h1M16 334h1M14 335h2M19 335h1M15 336h1M18 337h1M22 337h1M15 341h1M17 341h1M16 342h1M14 345h1M16 345h1M15 346h1M17 346h1M22 348h1M16 349h1M17 352h1M16 353h1M22 353h1M20 354h1M22 354h1M17 356h1M15 357h1M14 358h1M19 360h1M22 360h1M15 361h1M16 362h1M16 363h1M20 363h1M18 364h1M15 365h1M20 366h1M14 367h1M15 369h2M14 370h1M18 372h1M14 373h1M21 374h1M16 376h1M17 377h1M14 378h1M18 378h1M15 379h1M18 381h1M15 382h2M15 383h1M18 383h1M18 384h1M15 385h1M20 385h1M14 386h1M16 386h1M16 387h1M14 391h1M16 391h1M18 391h1M20 392h1M14 393h1M18 393h1M15 395h1M18 395h1M20 395h1M16 396h1M15 398h1M17 398h1M16 399h1M20 399h1M20 401h1M16 402h1M17 404h1M18 405h1M14 406h1M16 407h1M21 407h1M14 408h1M18 409h1M15 410h1M15 411h1M18 411h1M18 412h1M15 415h1M17 415h1M14 418h1M16 419h1M19 419h1M15 421h1M17 423h1M16 430h1M18 430h1M18 431h1M15 432h1M18 432h1M21 432h1M16 433h1M22 433h1M15 434h1M18 434h1M20 435h1M14 436h1M16 440h1M21 440h1M17 442h2M17 443h1M14 444h1M18 444h2M20 445h1M15 447h1M17 447h2M14 448h1M21 448h1M17 449h1M15 452h1M17 452h1M21 453h2M17 457h1M18 458h1M15 460h1M18 460h1M20 460h1M19 461h1M15 462h1M19 462h1M16 463h1M15 464h1M17 464h1M18 465h1M22 466h1M17 467h2M15 468h1M20 469h1M21 470h1M15 473h1M18 473h1M14 474h1M17 475h1M17 478h1M16 479h1M20 479h1M17 480h1M19 480h1M17 481h1M21 481h1M17 482h1M16 483h1M18 484h1M21 486h1M14 487h1M14 488h1M20 488h2M16 489h1M18 489h1M16 490h1M15 491h1M17 493h1M20 493h1M17 494h1M15 496h1M17 496h1M22 497h1M20 498h1M22 498h1M21 499h1M21 500h1M14 505h1M20 507h2M14 508h1M17 511h1M21 514h1M18 515h2M16 516h1M18 516h1M16 517h3M14 518h1M18 518h1M21 518h1M14 520h1M14 522h1M17 524h1M18 526h1M17 531h1M14 535h2M15 537h2M18 537h1M17 538h1M16 539h1M18 539h1M15 540h1M15 541h1M18 542h1M15 543h1M17 543h3M17 544h1M21 544h2M14 545h2M18 545h1M17 546h1M20 546h1M16 547h1M14 550h1M14 551h2M18 551h2M15 553h1M17 553h1M14 554h1M22 555h1M14 558h1M17 558h1M16 559h1M18 559h1M14 560h1M16 561h1M17 563h1M19 563h1M14 564h1M18 564h1M16 567h2M22 572h1M14 573h1M22 574h1M14 575h1M14 576h1M19 576h1M15 578h1M17 579h1M20 580h1M16 581h1M19 582h1M14 583h1M18 583h2M16 584h1M21 585h1M16 586h1M15 587h1M19 587h1M14 588h2M18 588h1M17 589h3M17 590h1M16 592h1M15 593h1M18 593h1M14 594h2M14 598h1M19 598h1M15 599h1M19 600h1M18 601h1M19 602h1M18 605h1M22 605h1M14 609h1M18 609h1M20 610h1M18 611h1M16 612h1M19 612h1M17 613h1M15 616h2M20 617h1M16 619h1M18 619h1M21 619h1M18 620h1M15 621h2M18 621h1M14 622h1M14 624h1M17 624h1M15 625h1M19 625h1M21 626h1M16 629h1M21 629h2M16 630h2M15 633h2M18 635h1M14 636h1M22 636h1M16 637h1M15 638h1M19 638h1M18 639h1M21 639h1M18 640h1M14 641h1M15 643h1M22 644h1M14 645h1M21 645h1M15 646h1M15 647h2M18 647h1M22 647h1M14 649h1M20 649h1M16 650h1M15 652h1M22 652h1M16 653h1M18 654h1M14 655h1M16 655h1M19 656h2M19 657h3M15 659h1M14 660h1M14 663h1M17 664h1M14 666h1M14 667h1M16 667h1M14 668h1M15 669h1M17 669h1M20 669h1M15 673h2M21 673h1M15 675h1M19 675h2M18 676h1M14 678h1M17 679h2M18 680h1M17 684h1M15 685h1M15 688h1M22 688h1M14 690h1M17 690h1M15 691h1M18 693h1M14 694h1M18 694h1M22 694h1M17 695h2M14 696h1M16 696h1M18 696h1M18 697h1M17 699h1M22 699h1M21 700h1M18 702h1M17 703h1M15 704h1M15 705h1M14 706h2M17 706h1M19 707h1M14 708h2M15 709h2M16 710h1M19 710h1M14 713h1M16 713h1M20 713h1M18 714h1M22 714h1M15 715h1M22 717h1M18 718h1M21 718h1M14 719h1M22 719h1M21 720h1M15 721h1M20 721h1M18 725h1M22 726h1M15 729h1M14 732h1M20 732h1M17 734h1M16 736h1M18 736h2M16 737h1M21 738h1M15 739h1M17 739h1M22 739h1M16 741h1M18 741h1M20 741h2M17 742h2M20 744h1M15 746h1M21 747h1M17 748h1M14 749h1M19 754h1M14 755h1M16 755h1M15 757h2M14 759h1M16 760h2M19 760h1M16 762h1M16 763h1M15 764h1M20 764h2M15 768h1M17 768h2M17 769h1M14 770h2" stroke="#8e8e8e"/>
<path d="M18 42h1M21 44h1M15 47h1M23 47h1M16 54h1M24 55h1M14 56h1M24 57h1M17 59h1M22 59h1M22 60h1M20 61h2M23 61h2M23 63h1M16 65h1M16 66h1M21 66h1M15 67h1M23 67h1M24 68h1M13 69h2M17 72h1M20 72h1M21 73h1M21 75h1M24 77h1M22 78h2M14 79h1M22 79h2M21 80h1M24 82h1M14 83h1M21 83h1M14 84h1M19 84h3M15 85h1M19 86h1M22 87h1M24 88h1M21 89h1M21 92h1M14 93h1M23 94h1M20 95h1M22 95h1M21 96h1M23 96h1M21 97h1M13 98h1M23 98h1M23 99h1M23 101h2M17 103h1M20 103h1M21 104h1M24 105h1M21 106h3M22 107h1M24 108h1M20 109h1M22 109h1M21 110h1M21 111h1M19 112h1M21 112h1M24 112h1M16 113h1M15 115h1M23 117h1M14 118h1M21 118h1M23 120h1M24 121h1M23 122h1M24 123h1M14 124h1M17 125h1M21 125h1M19 126h1M18 127h2M22 127h1M24 128h1M13 129h1M21 129h1M24 130h1M21 131h1M14 132h1M18 132h1M13 133h1M23 133h1M21 134h1M22 135h1M13 137h2M14 138h1M19 138h1M15 140h1M22 140h1M13 143h1M14 145h1M18 145h1M21 145h2M13 146h1M22 146h2M13 147h1M24 148h1M24 151h1M19 154h1M23 155h1M16 156h1M19 156h1M23 156h2M23 159h1M22 160h1M20 161h1M22 161h2M22 162h1M24 162h1M21 163h1M24 164h1M21 165h1M14 166h1M24 167h1M21 168h1M24 168h1M24 170h1M21 171h1M16 172h1M21 175h1M21 177h2M13 180h1M14 181h1M18 181h1M23 182h1M21 183h1M15 184h1M21 185h1M22 186h1M17 187h1M21 187h1M21 188h1M14 189h1M21 189h2M18 193h1M24 193h1M21 194h1M23 194h1M20 195h3M24 195h1M17 196h1M22 196h1M18 197h1M23 198h2M24 199h1M23 201h1M21 203h1M24 203h1M18 204h1M21 204h2M24 205h1M24 207h1M24 210h1M22 211h1M24 211h1M15 212h1M22 216h1M24 216h1M21 217h1M19 218h1M22 220h2M19 222h1M22 222h1M14 223h1M24 223h1M14 224h1M22 224h1M24 224h1M19 226h1M22 226h1M13 227h1M17 227h1M22 227h1M23 228h1M15 229h1M18 229h1M22 229h1M17 231h1M14 233h1M20 233h2M23 234h1M22 235h2M18 236h1M23 240h1M23 241h1M23 242h1M21 243h1M18 244h1M16 245h1M17 246h1M23 247h1M23 248h1M21 249h1M23 250h2M17 251h1M19 251h1M24 252h1M14 253h1M22 253h1M20 254h1M23 255h1M22 256h1M24 256h1M21 257h1M24 259h1M19 262h1M22 263h1M22 264h1M24 264h1M16 265h1M23 267h1M24 268h1M21 269h1M21 270h1M23 270h1M21 271h1M16 272h1M24 273h1M24 274h1M22 275h1M19 277h1M21 278h1M13 279h1M14 280h1M22 280h1M13 281h1M17 281h1M24 281h1M13 283h1M23 284h1M21 285h2M21 288h1M24 290h1M21 291h1M23 291h1M23 293h2M22 295h1M13 296h1M21 296h1M15 297h1M14 304h1M18 304h1M21 304h1M23 305h1M19 306h1M20 307h3M13 309h1M21 309h1M15 311h1M21 312h1M22 317h1M24 317h1M17 318h1M19 318h1M21 321h1M17 322h1M23 323h1M13 324h1M17 326h1M22 327h1M18 328h1M19 329h1M14 331h1M17 331h1M15 332h2M19 333h1M21 333h1M20 334h1M22 334h2M13 335h1M20 335h1M24 335h1M23 336h1M24 338h1M14 339h1M23 339h1M18 340h1M14 341h1M22 341h1M15 342h1M22 342h1M17 343h1M24 344h1M21 346h2M24 346h1M16 347h2M20 347h1M22 347h1M24 348h1M13 349h1M24 354h1M22 356h1M24 356h1M14 359h1M24 359h1M23 360h2M13 362h1M15 362h1M22 362h1M21 363h2M24 367h1M20 368h1M23 368h1M21 370h1M23 370h1M15 371h1M22 371h1M20 373h2M24 373h1M16 374h1M22 374h2M18 375h1M15 377h1M21 377h1M13 378h1M22 379h1M22 382h1M22 383h1M24 383h1M16 384h1M18 384h1M21 384h1M15 385h1M14 386h1M16 386h1M22 388h2M13 389h1M22 390h1M24 392h1M21 393h1M21 395h1M23 396h1M19 397h1M23 397h1M19 399h1M21 400h1M20 401h2M23 401h1M24 404h1M19 405h1M22 405h1M16 408h1M15 409h1M13 410h1M22 410h1M16 411h1M14 413h1M19 413h1M13 416h1M22 416h1M16 418h2M23 419h1M24 420h1M19 421h1M22 421h1M23 422h1M21 425h1M13 426h1M23 426h1M14 428h1M23 428h1M18 431h1M23 431h1M21 433h1M18 435h1M22 437h1M24 437h1M13 438h1M20 438h1M24 439h1M18 440h1M21 441h1M21 443h1M23 443h1M21 444h1M22 445h2M14 447h2M17 447h1M24 447h1M20 449h1M22 449h2M20 450h1M24 451h1M18 452h1M14 454h1M16 454h1M23 455h1M20 456h2M19 459h1M21 459h1M13 460h1M17 460h1M22 460h1M21 461h2M13 462h1M15 462h1M20 462h1M22 462h2M15 463h1M21 464h1M24 464h1M21 465h1M24 466h1M13 467h2M22 467h1M20 469h1M24 469h1M15 471h1M23 471h1M24 473h1M24 475h1M13 478h1M14 479h1M23 479h2M16 480h1M23 480h2M18 481h1M23 481h1M20 482h2M24 485h1M21 486h2M16 487h1M22 487h2M23 488h1M24 489h1M22 492h1M13 493h1M16 493h1M21 493h3M22 494h1M19 495h1M23 495h1M15 497h1M21 497h1M19 498h1M13 499h1M21 501h1M23 501h2M21 508h1M23 509h1M19 510h1M23 511h1M15 512h1M17 512h1M24 513h1M14 514h1M18 514h1M21 514h1M20 515h1M19 516h1M22 516h1M16 518h1M21 518h1M23 518h1M23 519h2M17 520h1M22 521h2M21 522h1M19 524h1M22 524h1M16 525h1M21 526h1M21 527h1M22 528h1M18 530h1M14 532h1M17 532h1M20 532h2M13 534h1M21 534h1M22 535h1M18 536h1M21 536h1M22 539h2M16 540h1M21 540h2M22 541h1M18 542h1M14 543h1M21 544h1M16 546h1M23 546h1M17 547h1M21 548h2M18 549h1M21 549h1M23 549h1M21 550h1M23 552h2M18 555h1M24 557h1M22 558h1M21 559h1M22 560h1M24 560h1M21 561h1M24 562h1M21 563h2M24 564h1M19 566h1M22 568h1M21 570h1M24 570h1M22 572h2M22 573h1M18 574h1M21 574h1M13 576h1M16 577h1M15 579h1M21 579h1M14 580h1M23 580h1M23 581h1M16 582h1M20 582h1M16 583h1M15 584h1M22 584h1M22 586h1M21 587h1M24 587h1M13 588h1M22 588h1M21 589h2M24 589h1M18 590h1M21 591h1M15 592h1M23 592h1M16 593h1M23 593h1M13 594h1M18 594h1M23 594h1M20 595h1M13 596h1M15 596h1M17 596h1M13 598h1M20 598h1M18 599h1M16 600h1M21 602h1M23 603h1M23 605h1M22 608h2M20 609h1M24 610h1M19 611h1M16 612h1M19 615h2M16 616h1M24 616h1M22 617h3M21 618h2M13 620h1M24 620h1M14 622h1M22 622h1M16 624h1M23 625h1M19 626h1M23 626h1M22 627h1M17 628h1M20 628h1M20 629h1M24 629h1M21 631h1M21 633h2M22 634h1M22 636h1M15 637h1M21 637h2M14 638h1M20 640h1M18 642h1M20 643h1M22 643h1M20 644h1M23 644h1M18 646h1M23 646h1M24 647h1M15 649h1M22 649h1M22 650h1M23 652h1M21 654h2M22 655h2M24 656h1M21 657h1M14 658h1M22 658h1M20 661h1M21 662h1M22 665h1M21 672h1M24 673h1M21 674h1M22 675h1M17 676h1M19 676h1M23 680h1M21 682h1M16 684h1M21 684h1M23 684h2M24 686h1M22 688h1M21 691h1M24 692h1M23 695h1M13 696h1M16 696h1M20 696h1M17 697h1M22 698h1M21 699h1M23 699h2M13 700h1M23 700h1M24 701h1M21 702h1M23 702h1M16 704h1M22 704h1M22 705h2M21 706h1M14 707h1M24 707h1M16 708h1M21 710h1M22 711h2M17 713h1M23 713h1M17 714h1M19 716h1M22 718h1M20 720h3M14 721h1M21 721h1M17 722h1M24 724h1M13 726h1M24 727h1M16 728h1M23 728h1M21 729h1M18 730h1M22 731h1M24 731h1M19 732h1M22 732h1M13 733h1M22 733h1M14 734h1M22 734h1M13 735h1M15 735h1M22 735h1M21 736h2M15 737h1M23 738h1M21 739h1M16 740h1M21 740h1M23 740h1M20 741h1M24 741h1M20 742h1M19 745h1M14 748h1M16 749h1M21 749h1M23 749h1M18 751h1M21 752h1M19 753h1M22 754h1M24 754h1M21 756h1M24 756h1M18 758h1M15 759h1M24 759h1M19 761h1M21 761h2M24 761h1M23 762h1M21 763h1M23 763h2M19 764h1M22 764h1M21 765h1M24 767h1M22 769h1M24 770h1" stroke="#1c2290"/>
<path d="M12 51h1M17 67h1M16 91h1M18 97h1M19 101h1M14 121h1M19 121h1M16 125h1M18 126h1M18 130h1M15 137h1M12 156h1M13 169h1M12 182h1M18 197h1M12 213h1M18 224h1M12 244h1M14 252h1M14 253h1M15 254h1M12 258h1M15 258h1M13 277h1M13 279h1M16 285h1M13 301h1M19 309h1M17 310h1M12 314h1M14 315h1M13 317h1M19 327h1M14 348h1M13 353h1M19 359h1M16 360h1M14 365h1M17 377h1M15 391h1M19 400h1M14 413h1M14 445h1M14 452h1M13 462h1M12 479h1M12 484h1M19 485h1M19 502h1M15 507h1M15 514h1M15 516h1M17 520h1M18 521h1M15 523h1M12 532h1M17 535h1M19 543h1M13 544h1M19 550h1M18 555h2M19 565h1M14 570h1M19 571h1M16 578h1M12 587h1M19 590h1M18 645h1M19 665h1M15 671h1M15 691h1M19 697h1M14 699h1M13 717h1M12 735h2M19 749h1M17 753h1" stroke="#e6de5a"/></g>
</svg>
<div id="tx">
<div style="position:absolute;left:33px;top:8px;width:1300px;height:900px;background:#f1f1f1;border-radius:14px 0 0 0"></div>
<svg style="position:absolute;left:46px;top:22px" width="42" height="42" viewBox="0 0 771 771">
<defs><linearGradient id="lg1" x1="0" x2="1" y1="0" y2="0"><stop offset="0" stop-color="#00a6ff"/><stop offset="0.25" stop-color="#0aa0ff"/><stop offset="1" stop-color="#2a5cff"/></linearGradient>
<linearGradient id="lg2" x1="0" x2="1" y1="0" y2="0"><stop offset="0" stop-color="#00a8ff"/><stop offset="0.35" stop-color="#04a0ff"/><stop offset="1" stop-color="#1f66ff"/></linearGradient></defs>
<polygon points="100,170 330,295 420,345 420,700 260,615 260,440 100,350" fill="url(#lg1)"/>
<polygon points="330,240 640,70 640,250 490,335 490,520 330,605" fill="url(#lg2)"/>
</svg>
<div style="position:absolute;left:293px;top:20px;width:295px;height:47px;border-radius:24px;background:#e3e3e3"></div>
<svg style="position:absolute;left:558.5px;top:41px" width="10" height="5" viewBox="0 0 10 5"><path d="M0 0h10l-5 5z" fill="#5e5e5e"/></svg>
<svg style="position:absolute;left:611px;top:31px" width="24" height="24" viewBox="0 0 24 24"><path d="M10 18h4v-2h-4v2zM3 6v2h18V6H3zm3 7h12v-2H6v2z" fill="#686868"/></svg>
<svg style="position:absolute;left:658px;top:31px" width="24" height="24" viewBox="0 0 24 24"><path d="M17.65 6.35C16.2 4.9 14.21 4 12 4c-4.42 0-7.99 3.58-7.99 8s3.57 8 7.99 8c3.73 0 6.84-2.55 7.73-6h-2.08c-.82 2.33-3.04 4-5.650 4-3.310 0-6-2.690-6-6s2.690-6 6-6c1.660 0 3.140.690 4.220 1.780L13 11h7V4l-2.350 2.350z" fill="#686868"/></svg>
<div style="position:absolute;left:931px;top:20px;width:400px;height:47px;border-radius:24px;background:#e3e3e3"></div>
<svg style="position:absolute;left:946px;top:31px" width="24" height="24" viewBox="0 0 24 24"><path d="M15.5 14h-.79l-.28-.27C15.410 12.590 16 11.110 16 9.500 16 5.910 13.090 3 9.500 3S3 5.910 3 9.500 5.910 16 9.500 16c1.610 0 3.090-.590 4.230-1.570l.27.28v.79l5 4.990L20.490 19l-4.990-5zm-6 0C7.010 14 5 11.990 5 9.500S7.010 5 9.500 5 14 7.010 14 9.500 11.990 14 9.500 14z" fill="#5a5a5a"/></svg>
<div style="position:absolute;left:45px;top:532px;width:212px;height:36px;border-radius:18px;background:#0068e0"></div>
<div style="position:absolute;left:45px;top:345px;width:212px;height:1px;background:#d9d9d9"></div>
<div style="position:absolute;left:45px;top:612px;width:212px;height:1px;background:#d9d9d9"></div>
<svg style="position:absolute;left:51.75px;top:93.20px" width="22" height="22" viewBox="-11 -11 22 22"><circle cx="0" cy="0.8" r="7.5" stroke="#686868" fill="none" stroke-width="1.5" stroke-linecap="round" stroke-linejoin="round" stroke-width="1.4"/><path d="M2.30 -1.42C2.30 -3.83 -2.30 -3.83 -2.30 -1.05C-2.30 0.61 2.30 0.99 2.30 2.65C2.30 5.42 -2.30 5.42 -2.30 3.02M0 -4.30v1.70M0 4.20v1.70" stroke="#686868" fill="none" stroke-width="1.3" stroke-linecap="butt"/></svg>
<svg style="position:absolute;left:51.75px;top:129.00px" width="22" height="22" viewBox="-11 -11 22 22"><rect x="-7.5" y="-5.1" width="15" height="11.4" rx="1" stroke="#686868" fill="none" stroke-width="1.5" stroke-linecap="round" stroke-linejoin="round"/><path d="M1.75 -1.02C1.75 -2.78 -1.75 -2.78 -1.75 -0.75C-1.75 0.46 1.75 0.73 1.75 1.95C1.75 3.98 -1.75 3.98 -1.75 2.22M0 -3.20v1.40M0 3.00v1.40" stroke="#686868" fill="none" stroke-width="1.5" stroke-linecap="butt"/></svg>
<svg style="position:absolute;left:51.75px;top:164.60px" width="22" height="22" viewBox="-11 -11 22 22"><path d="M-7.4 -3.4L0 -7.5L7.4 -3.4z" stroke="#686868" fill="none" stroke-width="1.5" stroke-linecap="round" stroke-linejoin="round" stroke-width="1.4" stroke-linejoin="miter"/><path d="M-5 -0.7v5.5M0 -0.7v5.5M5 -0.7v5.5" stroke="#686868" fill="none" stroke-width="1.5" stroke-linecap="butt" stroke-linejoin="miter"/><path d="M-8.2 7.3h16.4" stroke="#686868" fill="none" stroke-width="1.5" stroke-linecap="butt" stroke-linejoin="miter" stroke-width="1.6"/></svg>
<svg style="position:absolute;left:51.75px;top:200.40px" width="22" height="22" viewBox="-11 -11 22 22"><path d="M-7.7 -6.8H-0.8L7.2 1.2L0.2 8.1L-7.7 0.2z" stroke="#686868" fill="none" stroke-width="1.5" stroke-linecap="round" stroke-linejoin="round"/><circle cx="-4.7" cy="-3.9" r="1.1" fill="#686868"/></svg>
<svg style="position:absolute;left:51.75px;top:236.20px" width="22" height="22" viewBox="-11 -11 22 22"><path d="M0 -3.8C-2.5 -5.2 -5.5 -5.5 -8 -4.9V5.3C-5.5 4.700 -2.5 5 0 6.300C2.5 5 5.5 4.700 8 5.300V-4.900C5.5 -5.500 2.5 -5.200 0 -3.800zM0 -3.800V6.300" stroke="#686868" fill="none" stroke-width="1.5" stroke-linecap="round" stroke-linejoin="round" stroke-width="1.5"/><path d="M2.200 -1.900l3.800 -0.600M2.200 0.500l3.800 -0.600M2.200 2.900l3.800 -0.600" stroke="#686868" fill="none" stroke-width="1.5" stroke-linecap="round" stroke-linejoin="round" stroke-width="1.100"/></svg>
<svg style="position:absolute;left:51.75px;top:272.00px" width="22" height="22" viewBox="-11 -11 22 22"><rect x="-4.8" y="-5.2" width="12.9" height="8" rx="1.3" stroke="#686868" fill="none" stroke-width="1.5" stroke-linecap="round" stroke-linejoin="round" stroke-width="2.200"/><circle cx="1.650" cy="-1.200" r="2.100" fill="#686868"/><path d="M-7.800 -3.400V5.600H6.600" stroke="#686868" fill="none" stroke-width="1.5" stroke-linecap="round" stroke-linejoin="round"/></svg>
<svg style="position:absolute;left:51.75px;top:307.80px" width="22" height="22" viewBox="-11 -11 22 22"><path d="M-7.450 -0.600h2.100v3.300l-2.100 1.900zM-3.350 -4.300h2.200v6.300l-1.200 -0.900l-1 0.800zM0.850 -7.400h2.300v8.300l-2.300 2.200z" fill="#686868"/><path d="M-7.050 7.600L-2.950 4.100L0.250 6.400L6.400 0.600" stroke="#686868" fill="none" stroke-width="1.5" stroke-linecap="round" stroke-linejoin="round" stroke-width="1.500" stroke-linecap="butt"/><path d="M7.750 -0.700h-3.200l3.200 3.300z" fill="#686868"/></svg>
<svg style="position:absolute;left:51.75px;top:360.00px" width="22" height="22" viewBox="-11 -11 22 22"><rect x="-4.950" y="-3.500" width="3" height="8.200" stroke="#686868" fill="none" stroke-width="1.5" stroke-linecap="butt" stroke-linejoin="miter"/><path d="M-3.450 -5.800v2.300M-3.450 4.700v2.500" stroke="#686868" fill="none" stroke-width="1.5" stroke-linecap="butt" stroke-linejoin="miter"/><rect x="1.850" y="-1.700" width="2.700" height="4.100" stroke="#686868" fill="none" stroke-width="1.5" stroke-linecap="butt" stroke-linejoin="miter"/><path d="M3.200 -5.800v4.100M3.200 2.400v4.800" stroke="#686868" fill="none" stroke-width="1.5" stroke-linecap="butt" stroke-linejoin="miter"/></svg>
<svg style="position:absolute;left:51.75px;top:395.80px" width="22" height="22" viewBox="-11 -11 22 22"><rect x="-7.550" y="-4.800" width="14.700" height="11.100" rx="1.300" stroke="#686868" fill="none" stroke-width="1.5" stroke-linecap="round" stroke-linejoin="round" stroke-width="1.600"/><rect x="-7.550" y="-2.700" width="14.700" height="3.300" fill="#686868"/></svg>
<svg style="position:absolute;left:51.75px;top:431.60px" width="22" height="22" viewBox="-11 -11 22 22"><path d="M-0.250 -0.500V7.900" stroke="#686868" fill="none" stroke-width="1.5" stroke-linecap="round" stroke-linejoin="round"/><path d="M-7 -5.900C-3 -6.400 -0.300 -4 -0.300 1.300C-5 1.500 -7.300 -1.500 -7 -5.900z" stroke="#686868" fill="none" stroke-width="1.5" stroke-linecap="round" stroke-linejoin="round"/><path d="M6.700 -3.500C3 -3.800 0 -1.500 -0.200 3.600C4.500 3.800 6.900 0.600 6.700 -3.500z" stroke="#686868" fill="none" stroke-width="1.5" stroke-linecap="round" stroke-linejoin="round"/></svg>
<svg style="position:absolute;left:51.75px;top:467.40px" width="22" height="22" viewBox="-11 -11 22 22"><path d="M-7.500 -2.900H7M3.750 -6.400L7.300 -2.900L3.750 0.600M7 3.800H-7.300M-4.050 0.100L-7.600 3.800L-4.050 7.500" stroke="#686868" fill="none" stroke-width="1.5" stroke-linecap="round" stroke-linejoin="round" stroke-linecap="butt" stroke-linejoin="miter"/></svg>
<svg style="position:absolute;left:51.75px;top:503.20px" width="22" height="22" viewBox="-11 -11 22 22"><path d="M-8.08 -0.11A8.0 8.0 0 0 1 6.83 -3.55M7.89 0.87A8.0 8.0 0 0 1 -7.03 4.45" stroke="#686868" fill="none" stroke-width="1.5" stroke-linecap="round" stroke-linejoin="round" stroke-width="1.400" stroke-linecap="butt"/><path d="M8.200 -7.100v4.200h-3.800M-8.300 7.700v-4.200h3.800" stroke="#686868" fill="none" stroke-width="1.5" stroke-linecap="round" stroke-linejoin="round" stroke-width="1.400" stroke-linecap="butt" stroke-linejoin="miter"/><path d="M2.00 -1.99C2.00 -4.52 -2.20 -4.52 -2.20 -1.60C-2.20 0.15 2.00 0.54 2.00 2.30C2.00 5.22 -2.20 5.22 -2.20 2.69M-0.1 -4.55v1.30M-0.1 3.95v1.30" stroke="#686868" fill="none" stroke-width="1.35" stroke-linecap="butt"/></svg>
<svg style="position:absolute;left:51.75px;top:539.00px" width="22" height="22" viewBox="-11 -11 22 22"><circle cx="-0.300" cy="0.300" r="7.500" stroke="#fff" fill="none" stroke-width="1.5" stroke-linecap="round" stroke-linejoin="round"/><circle cx="-0.300" cy="0.300" r="4.050" stroke="#fff" fill="none" stroke-width="1.5" stroke-linecap="round" stroke-linejoin="round"/><circle cx="-0.300" cy="0.300" r="1.650" fill="#fff"/></svg>
<svg style="position:absolute;left:51.75px;top:574.80px" width="22" height="22" viewBox="-11 -11 22 22"><circle cx="2.750" cy="0.200" r="5.500" stroke="#686868" fill="none" stroke-width="1.5" stroke-linecap="round" stroke-linejoin="round"/><path d="M2.750 -3.200v3.600l2.300 2.100" stroke="#686868" fill="none" stroke-width="1.5" stroke-linecap="round" stroke-linejoin="round" stroke-linecap="butt"/><path d="M-8.900 -2.800h4.100M-7.700 0.200h2.900M-8.900 3.200h4.100" stroke="#686868" fill="none" stroke-width="1.5" stroke-linecap="butt" stroke-linejoin="miter"/></svg>
<svg style="position:absolute;left:51.75px;top:627.00px" width="22" height="22" viewBox="-11 -11 22 22"><circle cx="-0.150" cy="0.500" r="7.650" stroke="#686868" fill="none" stroke-width="1.5" stroke-linecap="round" stroke-linejoin="round"/><path d="M-7.800 0.800a7.650 7.650 0 0 0 15.300 0z" fill="#686868"/></svg>
<svg style="position:absolute;left:51.75px;top:662.80px" width="22" height="22" viewBox="-11 -11 22 22"><path d="M-7.650 -0.200h2.400v5.200h-2.400zM-3.550 -4.300h2.400v9.300h-2.400zM0.550 -2h2.400v7h-2.400zM4.650 -6.800h2.400v11.800h-2.400z" fill="#686868"/><path d="M-8.550 7.100h16.800" stroke="#686868" fill="none" stroke-width="1.5" stroke-linecap="butt" stroke-linejoin="miter"/></svg>
<svg style="position:absolute;left:51.75px;top:698.60px" width="22" height="22" viewBox="-11 -11 22 22"><path d="M-2.12 -4.84L-1.66 -7.05L1.36 -7.05L1.82 -4.84L3.40 -3.93L5.55 -4.63L7.06 -2.02L5.38 -0.51L5.38 1.31L7.06 2.82L5.55 5.43L3.40 4.73L1.82 5.64L1.36 7.85L-1.66 7.85L-2.12 5.64L-3.70 4.73L-5.85 5.43L-7.36 2.82L-5.68 1.31L-5.68 -0.51L-7.36 -2.02L-5.85 -4.63L-3.70 -3.93z" stroke="#686868" fill="none" stroke-width="1.5" stroke-linecap="round" stroke-linejoin="round" stroke-width="1.400"/><circle cx="-0.150" cy="0.400" r="2.300" fill="#686868"/></svg>
<svg style="position:absolute;left:235px;top:102px" width="9" height="5" viewBox="0 0 10 5"><path d="M0 5h10l-5-5z" fill="#5e5e5e"/></svg>
<svg style="position:absolute;left:235px;top:369px" width="9" height="5" viewBox="0 0 10 5"><path d="M0 5h10l-5-5z" fill="#5e5e5e"/></svg>
<svg style="position:absolute;left:250.500px;top:636.500px" width="9" height="5" viewBox="0 0 10 5"><path d="M0 0h10l-5 5z" fill="#5e5e5e"/></svg>
<div style="position:absolute;left:293px;top:150px;width:244px;height:176px;border-radius:7.5px;background:#fff"></div>
<div style="position:absolute;left:307px;top:194px;width:1px;height:51px;background:#e0e0e0"></div>
<div style="position:absolute;left:545px;top:150px;width:328px;height:176px;border-radius:7.5px;background:#fff"></div>
<svg style="position:absolute;left:837.3px;top:160.2px" width="24" height="24" viewBox="0 0 24 24"><g fill="#5f5f5f"><circle cx="12" cy="7.600" r="1.400"/><circle cx="12" cy="12.300" r="1.400"/><circle cx="12" cy="17" r="1.400"/></g></svg>
<svg style="position:absolute;left:566.0px;top:192.1px" width="118.2" height="118.2" viewBox="-59.1 -59.1 118.2 118.2"><path d="M0 0L0.00 -57.10A57.1 57.1 0 0 1 32.67 46.83z" fill="#0068e0" stroke="#fff" stroke-width="0.7" stroke-linejoin="round"/><path d="M0 0L32.67 46.83A57.1 57.1 0 0 1 -57.10 0.00z" fill="#208fff" stroke="#fff" stroke-width="0.7" stroke-linejoin="round"/><path d="M0 0L-57.10 0.00A57.1 57.1 0 0 1 -22.68 -52.40z" fill="#62b1ff" stroke="#fff" stroke-width="0.7" stroke-linejoin="round"/><path d="M0 0L-22.68 -52.40A57.1 57.1 0 0 1 -6.66 -56.71z" fill="#94cbff" stroke="#fff" stroke-width="0.7" stroke-linejoin="round"/><path d="M0 0L-6.66 -56.71A57.1 57.1 0 0 1 -2.19 -57.06z" fill="#c4e3ff" stroke="#fff" stroke-width="0.7" stroke-linejoin="round"/><path d="M0 0L-2.19 -57.06A57.1 57.1 0 0 1 -0.00 -57.10z" fill="#e2f1ff" stroke="#fff" stroke-width="0.7" stroke-linejoin="round"/></svg>
<div style="position:absolute;left:703.5px;top:186.0px;width:14.600px;height:14.600px;border-radius:2.500px;background:#0068e0"></div>
<div style="position:absolute;left:809.0px;top:185.7px;width:48.6px;height:15.400px;border-radius:7.700px;background:#efefef"></div>
<div style="position:absolute;left:703.5px;top:209.0px;width:14.600px;height:14.600px;border-radius:2.500px;background:#208fff"></div>
<div style="position:absolute;left:809.0px;top:208.7px;width:48.6px;height:15.400px;border-radius:7.700px;background:#efefef"></div>
<div style="position:absolute;left:703.5px;top:232.0px;width:14.600px;height:14.600px;border-radius:2.500px;background:#62b1ff"></div>
<div style="position:absolute;left:813.0px;top:231.7px;width:44.6px;height:15.400px;border-radius:7.700px;background:#efefef"></div>
<div style="position:absolute;left:703.5px;top:255.0px;width:14.600px;height:14.600px;border-radius:2.500px;background:#94cbff"></div>
<div style="position:absolute;left:815.4px;top:254.7px;width:42.2px;height:15.400px;border-radius:7.700px;background:#efefef"></div>
<div style="position:absolute;left:703.5px;top:278.0px;width:14.600px;height:14.600px;border-radius:2.500px;background:#c4e3ff"></div>
<div style="position:absolute;left:817.2px;top:277.7px;width:40.4px;height:15.400px;border-radius:7.700px;background:#efefef"></div>
<div style="position:absolute;left:703.5px;top:301.0px;width:14.600px;height:14.600px;border-radius:2.500px;background:#e2f1ff"></div>
<div style="position:absolute;left:815.4px;top:300.7px;width:42.2px;height:15.400px;border-radius:7.700px;background:#efefef"></div>
<div style="position:absolute;left:881px;top:150px;width:244px;height:176px;border-radius:7.5px;background:#fff"></div>
<div style="position:absolute;left:895px;top:194px;width:1px;height:51px;background:#e0e0e0"></div>
<div style="position:absolute;left:1133px;top:150px;width:328px;height:176px;border-radius:7.5px;background:#fff"></div>
<svg style="position:absolute;left:1166.6px;top:192.1px" width="118.2" height="118.2" viewBox="-59.1 -59.1 118.2 118.2"><path d="M0 0L0.00 -57.10A57.1 57.1 0 1 1 -40.80 39.95z" fill="#0068e0" stroke="#fff" stroke-width="0.7" stroke-linejoin="round"/><path d="M0 0L-40.80 39.95A57.1 57.1 0 0 1 -14.78 -55.15z" fill="#208fff" stroke="#fff" stroke-width="0.7" stroke-linejoin="round"/><path d="M0 0L-14.78 -55.15A57.1 57.1 0 0 1 -0.00 -57.10z" fill="#62b1ff" stroke="#fff" stroke-width="0.7" stroke-linejoin="round"/></svg>
<div style="position:absolute;left:293px;top:334px;width:244px;height:176px;border-radius:7.5px;background:#fff"></div>
<div style="position:absolute;left:307px;top:378px;width:1px;height:51px;background:#e0e0e0"></div>
<div style="position:absolute;left:414px;top:447px;width:1px;height:36px;background:#e0e0e0"></div>
<div style="position:absolute;left:545px;top:334px;width:328px;height:176px;border-radius:7.5px;background:#fff"></div>
<svg style="position:absolute;left:837.3px;top:344.2px" width="24" height="24" viewBox="0 0 24 24"><g fill="#5f5f5f"><circle cx="12" cy="7.600" r="1.400"/><circle cx="12" cy="12.300" r="1.400"/><circle cx="12" cy="17" r="1.400"/></g></svg>
<svg style="position:absolute;left:566.0px;top:376.1px" width="118.2" height="118.2" viewBox="-59.1 -59.1 118.2 118.2"><path d="M0 0L0.00 -57.10A57.1 57.1 0 1 1 -40.52 40.23z" fill="#0068e0" stroke="#fff" stroke-width="0.7" stroke-linejoin="round"/><path d="M0 0L-40.52 40.23A57.1 57.1 0 0 1 -23.13 -52.20z" fill="#208fff" stroke="#fff" stroke-width="0.7" stroke-linejoin="round"/><path d="M0 0L-23.13 -52.20A57.1 57.1 0 0 1 -8.54 -56.46z" fill="#62b1ff" stroke="#fff" stroke-width="0.7" stroke-linejoin="round"/><path d="M0 0L-8.54 -56.46A57.1 57.1 0 0 1 -1.20 -57.09z" fill="#94cbff" stroke="#fff" stroke-width="0.7" stroke-linejoin="round"/><path d="M0 0L-1.20 -57.09A57.1 57.1 0 0 1 -0.40 -57.10z" fill="#c4e3ff" stroke="#fff" stroke-width="0.7" stroke-linejoin="round"/><path d="M0 0L-0.40 -57.10A57.1 57.1 0 0 1 -0.00 -57.10z" fill="#e2f1ff" stroke="#fff" stroke-width="0.7" stroke-linejoin="round"/></svg>
<div style="position:absolute;left:703.5px;top:369.7px;width:14.600px;height:14.600px;border-radius:2.500px;background:#0068e0"></div>
<div style="position:absolute;left:809.0px;top:369.4px;width:48.6px;height:15.400px;border-radius:7.700px;background:#efefef"></div>
<div style="position:absolute;left:703.5px;top:392.7px;width:14.600px;height:14.600px;border-radius:2.500px;background:#208fff"></div>
<div style="position:absolute;left:809.0px;top:392.4px;width:48.6px;height:15.400px;border-radius:7.700px;background:#efefef"></div>
<div style="position:absolute;left:703.5px;top:415.7px;width:14.600px;height:14.600px;border-radius:2.500px;background:#62b1ff"></div>
<div style="position:absolute;left:817.2px;top:415.4px;width:40.4px;height:15.400px;border-radius:7.700px;background:#efefef"></div>
<div style="position:absolute;left:703.5px;top:438.7px;width:14.600px;height:14.600px;border-radius:2.500px;background:#94cbff"></div>
<div style="position:absolute;left:817.2px;top:438.4px;width:40.4px;height:15.400px;border-radius:7.700px;background:#efefef"></div>
<div style="position:absolute;left:703.5px;top:461.7px;width:14.600px;height:14.600px;border-radius:2.500px;background:#c4e3ff"></div>
<div style="position:absolute;left:815.4px;top:461.4px;width:42.2px;height:15.400px;border-radius:7.700px;background:#efefef"></div>
<div style="position:absolute;left:703.5px;top:484.7px;width:14.600px;height:14.600px;border-radius:2.500px;background:#e2f1ff"></div>
<div style="position:absolute;left:815.4px;top:484.4px;width:42.2px;height:15.400px;border-radius:7.700px;background:#efefef"></div>
<div style="position:absolute;left:881px;top:334px;width:244px;height:176px;border-radius:7.5px;background:#fff"></div>
<div style="position:absolute;left:895px;top:378px;width:1px;height:51px;background:#e0e0e0"></div>
<div style="position:absolute;left:1133px;top:334px;width:328px;height:176px;border-radius:7.5px;background:#fff"></div>
<svg style="position:absolute;left:1166.6px;top:376.1px" width="118.2" height="118.2" viewBox="-59.1 -59.1 118.2 118.2"><path d="M0 0L0.00 -57.10A57.1 57.1 0 0 1 28.55 49.45z" fill="#0068e0" stroke="#fff" stroke-width="0.7" stroke-linejoin="round"/><path d="M0 0L28.55 49.45A57.1 57.1 0 0 1 -51.71 -24.22z" fill="#208fff" stroke="#fff" stroke-width="0.7" stroke-linejoin="round"/><path d="M0 0L-51.71 -24.22A57.1 57.1 0 0 1 -0.00 -57.10z" fill="#62b1ff" stroke="#fff" stroke-width="0.7" stroke-linejoin="round"/></svg>
<div style="position:absolute;left:293px;top:518px;width:244px;height:176px;border-radius:7.5px;background:#fff"></div>
<div style="position:absolute;left:307px;top:562px;width:1px;height:51px;background:#e0e0e0"></div>
<div style="position:absolute;left:545px;top:518px;width:328px;height:176px;border-radius:7.5px;background:#fff"></div>
<svg style="position:absolute;left:837.3px;top:528.2px" width="24" height="24" viewBox="0 0 24 24"><g fill="#5f5f5f"><circle cx="12" cy="7.600" r="1.400"/><circle cx="12" cy="12.300" r="1.400"/><circle cx="12" cy="17" r="1.400"/></g></svg>
<svg style="position:absolute;left:566.0px;top:560.1px" width="118.2" height="118.2" viewBox="-59.1 -59.1 118.2 118.2"><path d="M0 0L0.00 -57.10A57.1 57.1 0 0 1 32.67 46.83z" fill="#0068e0" stroke="#fff" stroke-width="0.7" stroke-linejoin="round"/><path d="M0 0L32.67 46.83A57.1 57.1 0 0 1 -57.10 0.00z" fill="#208fff" stroke="#fff" stroke-width="0.7" stroke-linejoin="round"/><path d="M0 0L-57.10 0.00A57.1 57.1 0 0 1 -22.68 -52.40z" fill="#62b1ff" stroke="#fff" stroke-width="0.7" stroke-linejoin="round"/><path d="M0 0L-22.68 -52.40A57.1 57.1 0 0 1 -6.66 -56.71z" fill="#94cbff" stroke="#fff" stroke-width="0.7" stroke-linejoin="round"/><path d="M0 0L-6.66 -56.71A57.1 57.1 0 0 1 -2.19 -57.06z" fill="#c4e3ff" stroke="#fff" stroke-width="0.7" stroke-linejoin="round"/><path d="M0 0L-2.19 -57.06A57.1 57.1 0 0 1 -0.00 -57.10z" fill="#e2f1ff" stroke="#fff" stroke-width="0.7" stroke-linejoin="round"/></svg>
<div style="position:absolute;left:703.5px;top:553.4px;width:14.600px;height:14.600px;border-radius:2.500px;background:#0068e0"></div>
<div style="position:absolute;left:809.0px;top:553.1px;width:48.6px;height:15.400px;border-radius:7.700px;background:#efefef"></div>
<div style="position:absolute;left:703.5px;top:576.4px;width:14.600px;height:14.600px;border-radius:2.500px;background:#208fff"></div>
<div style="position:absolute;left:809.0px;top:576.1px;width:48.6px;height:15.400px;border-radius:7.700px;background:#efefef"></div>
<div style="position:absolute;left:703.5px;top:599.4px;width:14.600px;height:14.600px;border-radius:2.500px;background:#62b1ff"></div>
<div style="position:absolute;left:810.9px;top:599.1px;width:46.7px;height:15.400px;border-radius:7.700px;background:#efefef"></div>
<div style="position:absolute;left:703.5px;top:622.4px;width:14.600px;height:14.600px;border-radius:2.500px;background:#94cbff"></div>
<div style="position:absolute;left:815.4px;top:622.1px;width:42.2px;height:15.400px;border-radius:7.700px;background:#efefef"></div>
<div style="position:absolute;left:703.5px;top:645.4px;width:14.600px;height:14.600px;border-radius:2.500px;background:#c4e3ff"></div>
<div style="position:absolute;left:817.2px;top:645.1px;width:40.4px;height:15.400px;border-radius:7.700px;background:#efefef"></div>
<div style="position:absolute;left:703.5px;top:668.4px;width:14.600px;height:14.600px;border-radius:2.500px;background:#e2f1ff"></div>
<div style="position:absolute;left:815.4px;top:668.1px;width:42.2px;height:15.400px;border-radius:7.700px;background:#efefef"></div>
<div style="position:absolute;left:881px;top:518px;width:244px;height:176px;border-radius:7.5px;background:#fff"></div>
<div style="position:absolute;left:895px;top:562px;width:1px;height:51px;background:#e0e0e0"></div>
<div style="position:absolute;left:1133px;top:518px;width:328px;height:176px;border-radius:7.5px;background:#fff"></div>
<svg style="position:absolute;left:1166.6px;top:560.1px" width="118.2" height="118.2" viewBox="-59.1 -59.1 118.2 118.2"><path d="M0 0L0.00 -57.10A57.1 57.1 0 1 1 -48.74 29.75z" fill="#0068e0" stroke="#fff" stroke-width="0.7" stroke-linejoin="round"/><path d="M0 0L-48.74 29.75A57.1 57.1 0 0 1 -9.92 -56.23z" fill="#208fff" stroke="#fff" stroke-width="0.7" stroke-linejoin="round"/><path d="M0 0L-9.92 -56.23A57.1 57.1 0 0 1 -0.00 -57.10z" fill="#62b1ff" stroke="#fff" stroke-width="0.7" stroke-linejoin="round"/></svg>
<div style="position:absolute;left:293px;top:702px;width:244px;height:176px;border-radius:7.5px;background:#fff"></div>
<div style="position:absolute;left:307px;top:746px;width:1px;height:51px;background:#e0e0e0"></div>
<div style="position:absolute;left:545px;top:702px;width:328px;height:176px;border-radius:7.5px;background:#fff"></div>
<svg style="position:absolute;left:837.3px;top:712.2px" width="24" height="24" viewBox="0 0 24 24"><g fill="#5f5f5f"><circle cx="12" cy="7.600" r="1.400"/><circle cx="12" cy="12.300" r="1.400"/><circle cx="12" cy="17" r="1.400"/></g></svg>
<svg style="position:absolute;left:578.5px;top:744.1px" width="118.2" height="118.2" viewBox="-59.1 -59.1 118.2 118.2"><path d="M0 0L0.00 -57.10A57.1 57.1 0 1 1 -21.11 -53.05z" fill="#0068e0" stroke="#fff" stroke-width="0.7" stroke-linejoin="round"/><path d="M0 0L-21.11 -53.05A57.1 57.1 0 0 1 -6.36 -56.74z" fill="#208fff" stroke="#fff" stroke-width="0.7" stroke-linejoin="round"/><path d="M0 0L-6.36 -56.74A57.1 57.1 0 0 1 -0.60 -57.10z" fill="#62b1ff" stroke="#fff" stroke-width="0.7" stroke-linejoin="round"/><path d="M0 0L-0.60 -57.10A57.1 57.1 0 0 1 -0.00 -57.10z" fill="#94cbff" stroke="#fff" stroke-width="0.7" stroke-linejoin="round"/></svg>
<div style="position:absolute;left:881px;top:702px;width:328px;height:176px;border-radius:7.5px;background:#fff"></div>
<div style="position:absolute;left:935px;top:750px;width:300px;height:1px;background:#e1e1e1"></div>
<div style="position:absolute;left:935px;top:766px;width:300px;height:1px;background:#e1e1e1"></div>
<div style="position:absolute;left:1047.500px;top:761.500px;width:27.500px;height:30px;background:#62b1ff"></div>
<span class="t" style="left:100.2px;top:35px;font-size:15.4px;line-height:17px;color:#2d2d2d;font-weight:700;letter-spacing:2.005px">TROVATA</span>
<span class="t" style="left:188.8px;top:35px;font-size:15.4px;line-height:17px;color:#6a6a6a;-webkit-text-stroke:0.46px #6a6a6a;letter-spacing:1.450px">TMS</span>
<span class="t" style="left:316.2px;top:36px;font-size:13.4px;line-height:15px;color:#262626;font-weight:700;letter-spacing:-0.026px">Assets, Liabilities and Credit</span>
<span class="t" style="left:980.0px;top:35px;font-size:14px;line-height:16px;color:#6b6b6b;letter-spacing:0.008px">Search</span>
<span class="t" style="left:293.3px;top:106px;font-size:16.6px;line-height:19px;color:#222222;-webkit-text-stroke:0.96px #222222;letter-spacing:0.164px">Assets, Liabilities, Credit (x1,000)</span>
<span class="t" style="left:88.2px;top:96px;font-size:14.5px;line-height:16px;color:#222;-webkit-text-stroke:0.84px #222;letter-spacing:-0.143px">Cash Mgmt</span>
<span class="t" style="left:88.2px;top:132px;font-size:14.5px;line-height:16px;color:#2e2e2e;-webkit-text-stroke:0.23px #2e2e2e;letter-spacing:-0.650px">Cash</span>
<span class="t" style="left:88.2px;top:168px;font-size:14.5px;line-height:16px;color:#2e2e2e;-webkit-text-stroke:0.23px #2e2e2e;letter-spacing:-0.068px">Banking</span>
<span class="t" style="left:88.2px;top:204px;font-size:14.5px;line-height:16px;color:#2e2e2e;-webkit-text-stroke:0.23px #2e2e2e;letter-spacing:-0.441px">Bank Fees</span>
<span class="t" style="left:88.2px;top:239px;font-size:14.5px;line-height:16px;color:#2e2e2e;-webkit-text-stroke:0.23px #2e2e2e;letter-spacing:-0.187px">Services</span>
<span class="t" style="left:88.2px;top:275px;font-size:14.5px;line-height:16px;color:#2e2e2e;-webkit-text-stroke:0.23px #2e2e2e;letter-spacing:-0.141px">Payments</span>
<span class="t" style="left:88.2px;top:311px;font-size:14.5px;line-height:16px;color:#2e2e2e;-webkit-text-stroke:0.23px #2e2e2e;letter-spacing:0.053px">Forecasting</span>
<span class="t" style="left:88.2px;top:363px;font-size:14.5px;line-height:16px;color:#222;-webkit-text-stroke:0.84px #222;letter-spacing:0.138px">Capital Mkts</span>
<span class="t" style="left:88.2px;top:399px;font-size:14.5px;line-height:16px;color:#2e2e2e;-webkit-text-stroke:0.23px #2e2e2e;letter-spacing:0.326px">Debt/Credit</span>
<span class="t" style="left:88.2px;top:435px;font-size:14.5px;line-height:16px;color:#2e2e2e;-webkit-text-stroke:0.23px #2e2e2e;letter-spacing:0.113px">Investments</span>
<span class="t" style="left:88.2px;top:471px;font-size:14.5px;line-height:16px;color:#2e2e2e;-webkit-text-stroke:0.23px #2e2e2e;letter-spacing:-0.429px">Loans</span>
<span class="t" style="left:88.2px;top:506px;font-size:14.5px;line-height:16px;color:#2e2e2e;-webkit-text-stroke:0.23px #2e2e2e;letter-spacing:-0.395px">Forex</span>
<span class="t" style="left:88.2px;top:542px;font-size:14.5px;line-height:16px;color:#fff;-webkit-text-stroke:0.84px #fff;letter-spacing:0.157px">Positions</span>
<span class="t" style="left:88.2px;top:578px;font-size:14.5px;line-height:16px;color:#2e2e2e;-webkit-text-stroke:0.23px #2e2e2e;letter-spacing:-0.110px">Short Term Funding</span>
<span class="t" style="left:88.2px;top:630px;font-size:14.5px;line-height:16px;color:#222;-webkit-text-stroke:0.84px #222;letter-spacing:-0.061px">Risk Mgmt</span>
<span class="t" style="left:88.2px;top:666px;font-size:14.5px;line-height:16px;color:#2e2e2e;-webkit-text-stroke:0.23px #2e2e2e;letter-spacing:-0.266px">Finance</span>
<span class="t" style="left:88.2px;top:702px;font-size:14.5px;line-height:16px;color:#2e2e2e;-webkit-text-stroke:0.23px #2e2e2e;letter-spacing:-0.102px">Setup</span>
<span class="t" style="left:307.6px;top:164px;font-size:14.5px;line-height:16px;color:#222222;-webkit-text-stroke:0.84px #222222;letter-spacing:-0.386px">Cash</span>
<span class="t" style="left:312.3px;top:196px;font-size:29px;line-height:32px;color:#1f1f1f;font-weight:700;letter-spacing:-0.596px">$541,180</span>
<span class="t" style="left:312.0px;top:234px;font-size:11px;line-height:12px;color:#7a7a7a;letter-spacing:-0.042px">Current Cash (x1k)</span>
<span class="t" style="left:559.3px;top:164px;font-size:14.5px;line-height:16px;color:#222222;-webkit-text-stroke:0.84px #222222;letter-spacing:-0.026px">Cash by Bank</span>
<span class="t" style="left:725.4px;top:188px;font-size:11.5px;line-height:12px;color:#262626;font-weight:700;letter-spacing:-0.039px">Bank of Am...</span>
<span class="t" style="left:814.6px;top:188px;font-size:11px;line-height:12px;color:#333">41.88%</span>
<span class="t" style="left:725.4px;top:211px;font-size:11.5px;line-height:12px;color:#262626;font-weight:700;letter-spacing:0.066px">JP Morgan...</span>
<span class="t" style="left:814.6px;top:211px;font-size:11px;line-height:12px;color:#333">36.39%</span>
<span class="t" style="left:725.4px;top:234px;font-size:11.5px;line-height:12px;color:#262626;font-weight:700;letter-spacing:0.089px">Citibank</span>
<span class="t" style="left:817.1px;top:234px;font-size:11px;line-height:12px;color:#333">17.11%</span>
<span class="t" style="left:725.4px;top:257px;font-size:11.5px;line-height:12px;color:#262626;font-weight:700;letter-spacing:0.072px">Canadian Im...</span>
<span class="t" style="left:820.9px;top:257px;font-size:11px;line-height:12px;color:#333">13.0%</span>
<span class="t" style="left:725.4px;top:280px;font-size:11.5px;line-height:12px;color:#262626;font-weight:700;letter-spacing:-0.127px">Wells Fargo</span>
<span class="t" style="left:821.8px;top:280px;font-size:11px;line-height:12px;color:#333">3.12%</span>
<span class="t" style="left:725.4px;top:303px;font-size:11.5px;line-height:12px;color:#262626;font-weight:700;letter-spacing:0.082px">Other</span>
<span class="t" style="left:820.9px;top:303px;font-size:11px;line-height:12px;color:#333">0.79%</span>
<span class="t" style="left:895.6px;top:164px;font-size:14.5px;line-height:16px;color:#222222;-webkit-text-stroke:0.84px #222222;letter-spacing:0.613px">Investments</span>
<span class="t" style="left:900.3px;top:196px;font-size:29px;line-height:32px;color:#1f1f1f;font-weight:700;letter-spacing:-0.598px">$17,524,600</span>
<span class="t" style="left:900.0px;top:234px;font-size:11px;line-height:12px;color:#7a7a7a;letter-spacing:0.073px">Market Value</span>
<span class="t" style="left:1147.3px;top:164px;font-size:14.5px;line-height:16px;color:#222222;-webkit-text-stroke:0.84px #222222"></span>
<span class="t" style="left:307.6px;top:348px;font-size:14.5px;line-height:16px;color:#222222;-webkit-text-stroke:0.84px #222222;letter-spacing:0.686px">Debt</span>
<span class="t" style="left:312.3px;top:380px;font-size:29px;line-height:32px;color:#1f1f1f;font-weight:700;letter-spacing:-0.298px">$20,843,551</span>
<span class="t" style="left:312.0px;top:418px;font-size:11px;line-height:12px;color:#7a7a7a;letter-spacing:0.166px">Total Debt O/S</span>
<span class="t" style="left:307.6px;top:450px;font-size:14.5px;line-height:16px;color:#222222;-webkit-text-stroke:0.84px #222222;letter-spacing:0.458px">5.2860%</span>
<span class="t" style="left:307.6px;top:471px;font-size:11px;line-height:12px;color:#7a7a7a;letter-spacing:-0.261px">WA Yield</span>
<span class="t" style="left:419.2px;top:450px;font-size:14.5px;line-height:16px;color:#222222;-webkit-text-stroke:0.84px #222222">6</span>
<span class="t" style="left:419.2px;top:471px;font-size:11px;line-height:12px;color:#7a7a7a;letter-spacing:-0.141px">WA Term Years</span>
<span class="t" style="left:559.3px;top:348px;font-size:14.5px;line-height:16px;color:#222222;-webkit-text-stroke:0.84px #222222;letter-spacing:0.144px">Asset Class</span>
<span class="t" style="left:725.4px;top:371px;font-size:11.5px;line-height:12px;color:#262626;font-weight:700;letter-spacing:-0.313px">CORPBOND</span>
<span class="t" style="left:814.6px;top:371px;font-size:11px;line-height:12px;color:#333">60.27%</span>
<span class="t" style="left:725.4px;top:394px;font-size:11.5px;line-height:12px;color:#262626;font-weight:700;letter-spacing:-0.370px">FRN</span>
<span class="t" style="left:814.6px;top:394px;font-size:11px;line-height:12px;color:#333">35.31%</span>
<span class="t" style="left:725.4px;top:417px;font-size:11.5px;line-height:12px;color:#262626;font-weight:700;letter-spacing:-0.650px">ABS</span>
<span class="t" style="left:821.8px;top:417px;font-size:11px;line-height:12px;color:#333">2.74%</span>
<span class="t" style="left:725.4px;top:440px;font-size:11.5px;line-height:12px;color:#262626;font-weight:700;letter-spacing:0.156px">BOND-MTN</span>
<span class="t" style="left:821.8px;top:440px;font-size:11px;line-height:12px;color:#333">1.52%</span>
<span class="t" style="left:725.4px;top:463px;font-size:11.5px;line-height:12px;color:#262626;font-weight:700;letter-spacing:-0.650px">CP</span>
<span class="t" style="left:820.9px;top:463px;font-size:11px;line-height:12px;color:#333">0.10%</span>
<span class="t" style="left:725.4px;top:486px;font-size:11.5px;line-height:12px;color:#262626;font-weight:700;letter-spacing:-0.512px">BANK LOAN</span>
<span class="t" style="left:820.9px;top:486px;font-size:11px;line-height:12px;color:#333">0.06%</span>
<span class="t" style="left:895.6px;top:348px;font-size:14.5px;line-height:16px;color:#222222;-webkit-text-stroke:0.84px #222222;letter-spacing:0.662px">Credit</span>
<span class="t" style="left:900.3px;top:380px;font-size:29px;line-height:32px;color:#1f1f1f;font-weight:700;letter-spacing:-0.573px">$1,189,993</span>
<span class="t" style="left:900.0px;top:418px;font-size:11px;line-height:12px;color:#7a7a7a;letter-spacing:0.179px">Available Amount</span>
<span class="t" style="left:1147.3px;top:348px;font-size:14.5px;line-height:16px;color:#222222;-webkit-text-stroke:0.84px #222222"></span>
<span class="t" style="left:307.6px;top:532px;font-size:14.5px;line-height:16px;color:#222222;-webkit-text-stroke:0.84px #222222;letter-spacing:0.171px">Loans</span>
<span class="t" style="left:312.3px;top:564px;font-size:29px;line-height:32px;color:#1f1f1f;font-weight:700;letter-spacing:-0.171px">$16,000</span>
<span class="t" style="left:312.0px;top:602px;font-size:11px;line-height:12px;color:#7a7a7a;letter-spacing:-0.097px">View Loans</span>
<span class="t" style="left:559.3px;top:532px;font-size:14.5px;line-height:16px;color:#222222;-webkit-text-stroke:0.84px #222222;letter-spacing:0.625px">Counterparty</span>
<span class="t" style="left:725.4px;top:556px;font-size:11.5px;line-height:12px;color:#262626;font-weight:700;letter-spacing:-0.039px">Bank of Am...</span>
<span class="t" style="left:814.6px;top:556px;font-size:11px;line-height:12px;color:#333">40.92%</span>
<span class="t" style="left:725.4px;top:579px;font-size:11.5px;line-height:12px;color:#262626;font-weight:700;letter-spacing:0.066px">JP Morgan...</span>
<span class="t" style="left:814.6px;top:579px;font-size:11px;line-height:12px;color:#333">35.56%</span>
<span class="t" style="left:725.4px;top:602px;font-size:11.5px;line-height:12px;color:#262626;font-weight:700;letter-spacing:0.089px">Citibank</span>
<span class="t" style="left:815.6px;top:602px;font-size:11px;line-height:12px;color:#333">16.72%</span>
<span class="t" style="left:725.4px;top:625px;font-size:11.5px;line-height:12px;color:#262626;font-weight:700;letter-spacing:-0.442px">CIBC</span>
<span class="t" style="left:820.9px;top:625px;font-size:11px;line-height:12px;color:#333">2.29%</span>
<span class="t" style="left:725.4px;top:648px;font-size:11.5px;line-height:12px;color:#262626;font-weight:700;letter-spacing:-0.261px">FSC Bank</span>
<span class="t" style="left:821.8px;top:648px;font-size:11px;line-height:12px;color:#333">3.12%</span>
<span class="t" style="left:725.4px;top:671px;font-size:11.5px;line-height:12px;color:#262626;font-weight:700;letter-spacing:0.082px">Other</span>
<span class="t" style="left:820.9px;top:671px;font-size:11px;line-height:12px;color:#333">1.39%</span>
<span class="t" style="left:895.6px;top:532px;font-size:14.5px;line-height:16px;color:#222222;-webkit-text-stroke:0.84px #222222;letter-spacing:0.339px">Credit Issued</span>
<span class="t" style="left:900.3px;top:564px;font-size:29px;line-height:32px;color:#1f1f1f;font-weight:700;letter-spacing:-0.573px">$1,162,993</span>
<span class="t" style="left:900.0px;top:602px;font-size:11px;line-height:12px;color:#7a7a7a;letter-spacing:0.266px">Credit Amount</span>
<span class="t" style="left:1147.3px;top:532px;font-size:14.5px;line-height:16px;color:#222222;-webkit-text-stroke:0.84px #222222"></span>
<span class="t" style="left:307.6px;top:716px;font-size:14.5px;line-height:16px;color:#222222;-webkit-text-stroke:0.84px #222222;letter-spacing:0.217px">Swaps</span>
<span class="t" style="left:312.3px;top:748px;font-size:29px;line-height:32px;color:#1f1f1f;font-weight:700;letter-spacing:-0.795px">$5,721,902</span>
<span class="t" style="left:312.0px;top:786px;font-size:11px;line-height:12px;color:#7a7a7a"></span>
<span class="t" style="left:559.3px;top:716px;font-size:14.5px;line-height:16px;color:#222222;-webkit-text-stroke:0.84px #222222;letter-spacing:0.196px">Swap Types</span>
<span class="t" style="left:896.0px;top:716px;font-size:14.5px;line-height:16px;color:#222222;-webkit-text-stroke:0.84px #222222;letter-spacing:0.553px">Maturity Profile</span>
<span class="t" style="left:900.5px;top:743px;font-size:13px;line-height:15px;color:#6f6f6f;letter-spacing:-0.170px">80K</span>
<span class="t" style="left:900.5px;top:759px;font-size:13px;line-height:15px;color:#6f6f6f;letter-spacing:-0.170px">60K</span>
<span class="t" style="left:1148.3px;top:164px;font-size:14.5px;line-height:16px;color:#222222;-webkit-text-stroke:0.84px #222222;letter-spacing:0.080px">Issuer</span>
<span class="t" style="left:1191.8px;top:164px;font-size:14.5px;line-height:16px;color:#222222;-webkit-text-stroke:0.84px #222222">Type</span>
<span class="t" style="left:1147.8px;top:348px;font-size:14.5px;line-height:16px;color:#222222;-webkit-text-stroke:0.84px #222222;letter-spacing:0.503px">Credit</span>
<span class="t" style="left:1193.3px;top:348px;font-size:14.5px;line-height:16px;color:#222222;-webkit-text-stroke:0.84px #222222">Lines</span>
<span class="t" style="left:1148.3px;top:532px;font-size:14.5px;line-height:16px;color:#222222;-webkit-text-stroke:0.84px #222222;letter-spacing:-0.650px">FX</span>
<span class="t" style="left:1168.0px;top:532px;font-size:14.5px;line-height:16px;color:#222222;-webkit-text-stroke:0.84px #222222;letter-spacing:-0.619px">Trades</span>
</div>
</body></html>
